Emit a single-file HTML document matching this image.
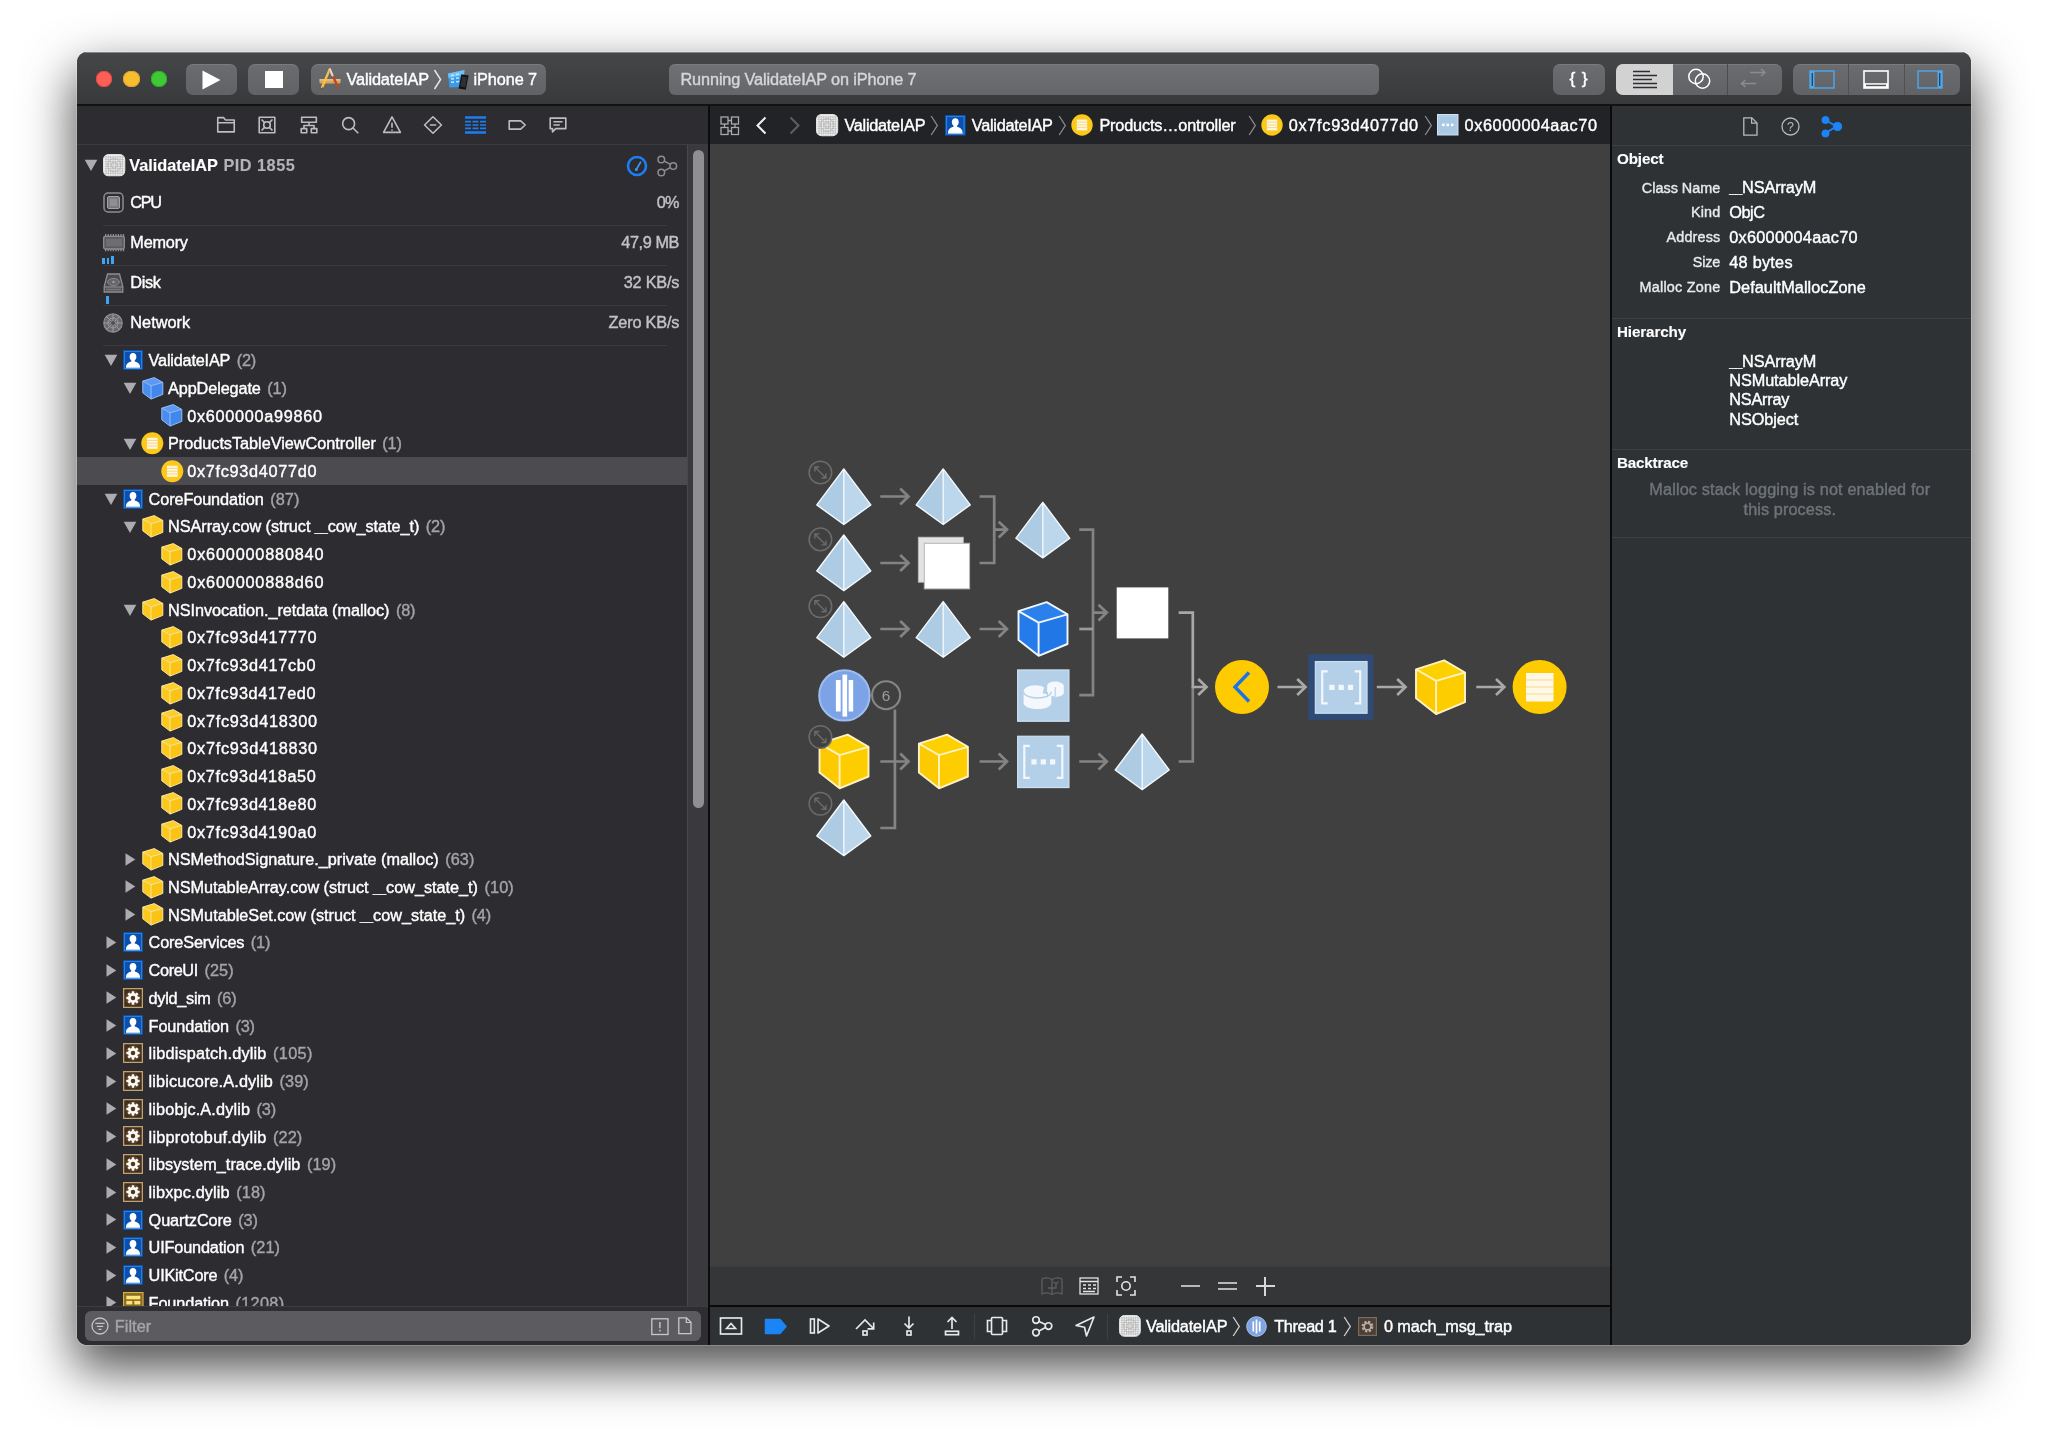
<!DOCTYPE html>
<html><head><meta charset="utf-8"><title>Xcode Memory Graph</title>
<style>html,body{margin:0;padding:0;background:#fff;width:2048px;height:1448px;overflow:hidden}
body{font-family:'Liberation Sans',sans-serif;position:relative}
#win{will-change:transform;position:absolute;left:77px;top:52px;width:1893.700px;height:1293.300px;border-radius:10px;overflow:hidden;background:#2d2c31;
 box-shadow:0 0 0 1px rgba(255,255,255,.2),0 22px 50px 3px rgba(0,0,0,.68)}
#win div,#win svg,#win .t{position:absolute}
#win div{box-sizing:border-box}
.t{white-space:pre;display:block;-webkit-text-stroke:0.4px currentColor;transform-origin:50% 52%}
svg{overflow:visible}
.btn{background:linear-gradient(#6a6c6f,#606265);border-radius:7px;box-shadow:inset 0 1px 0 rgba(255,255,255,.10)}

.t[style*=bold]{-webkit-text-stroke:0.12px currentColor}
</style></head>
<body><div id="win"><div class="" style="left:0px;top:0px;width:1894px;height:51.9px;background:linear-gradient(#464749,#38393b);box-shadow:inset 0 1px 0 rgba(255,255,255,.34)"></div><div class="" style="left:0px;top:51.9px;width:1894px;height:1.8px;background:#121213"></div><div class="" style="left:0px;top:53.7px;width:631.5px;height:1240.3px;background:#2d2c31"></div><div class="" style="left:631.3px;top:53.7px;width:1.6px;height:1240.3px;background:#0c0c0d"></div><div class="" style="left:632.9px;top:53.7px;width:900.1px;height:38.2px;background:#212326"></div><div class="" style="left:632.9px;top:91.9px;width:900.1px;height:1122.1px;background:#404040"></div><div class="" style="left:632.9px;top:1214px;width:900.1px;height:39px;background:#353637;border-top:1px solid #3c3d3d"></div><div class="" style="left:632.9px;top:1253px;width:900.1px;height:2px;background:#0a0a0b"></div><div class="" style="left:632.9px;top:1255px;width:900.1px;height:39px;background:#2f3235"></div><div class="" style="left:1533px;top:53.7px;width:2.2px;height:1240.3px;background:#0a0a0b"></div><div class="" style="left:1535.2px;top:53.7px;width:358.8px;height:1240.3px;background:#2f3235"></div><div class="" style="left:18.7px;top:18.7px;width:16.6px;height:16.6px;background:#fd5f57;border-radius:50%;box-shadow:inset 0 0 0 0.8px #e2463f"></div><div class="" style="left:46.3px;top:18.7px;width:16.6px;height:16.6px;background:#f5bd2f;border-radius:50%;box-shadow:inset 0 0 0 0.8px #dea123"></div><div class="" style="left:73.9px;top:18.7px;width:16.6px;height:16.6px;background:#3fc933;border-radius:50%;box-shadow:inset 0 0 0 0.8px #2dac2f"></div><div class="btn" style="left:109px;top:12px;width:51px;height:30.5px;"></div><svg style="left:123px;top:16.5px" width="22" height="22" viewBox="0 0 22 22" ><path d="M2.5 1.5 L20.5 11 L2.5 20.5 Z" fill="#fff"/></svg><div class="btn" style="left:171px;top:12px;width:51px;height:30.5px;"></div><div class="" style="left:188px;top:18.5px;width:17.5px;height:17.5px;background:#fff"></div><div class="btn" style="left:234px;top:12px;width:235px;height:30.5px;"></div><svg style="left:241px;top:15px" width="24" height="24" viewBox="0 0 24 24" ><rect x="1.5" y="12.2" width="21" height="4.2" rx=".8" fill="#d9a55c"/><rect x="1.5" y="12.2" width="21" height="1.3" fill="#f0c987"/>
<path d="M11.7 2.2 L4.2 20.3" stroke="#f5c443" stroke-width="2.3" stroke-linecap="round"/><path d="M4.2 20.3l-.9 2.2 1.9-1.5z" fill="#333"/>
<path d="M11.9 2.2 L20 20.6" stroke="#b64a2b" stroke-width="2.5" stroke-linecap="round"/><path d="M11.9 2.2 L14.5 8.4" stroke="#d8d8d8" stroke-width="2.2" stroke-linecap="round"/></svg><span class="t" style="left:269.5px;top:17px;line-height:21px;font-size:16.3px;color:#fff;letter-spacing:-0.125px;transform:scaleY(0.96);">ValidateIAP</span><svg style="left:356px;top:17px" width="10" height="21" viewBox="0 0 10 21" ><path d="M1.5 1 L7.6 10.5 L1.5 20" fill="none" stroke="#e6e6e6" stroke-width="1.5"/></svg><svg style="left:369px;top:15px" width="24" height="24" viewBox="0 0 24 24" ><path d="M2 6.5 L18.5 3 L16.8 20 L3.5 20.5 Z" fill="#3d9ae8"/><path d="M2 6.5 L18.5 3 L18 8 L2.6 11 Z" fill="#6fc0f7"/>
<path d="M5 8.6l3-.6M10 7.6l3-.6M5 12l3-.4M10 11.2l3-.5M5 15.3l3-.2M10 14.8l3-.3" stroke="#bfe3fb" stroke-width="1.6"/>
<path d="M15.4 7.2 L22.6 8.6 L19.8 22.8 L12.6 21.4 Z" fill="#111"/><path d="M16.3 9.2 L21.3 10.2 L19.2 20.6 L14.2 19.6 Z" fill="#2d2f33"/></svg><span class="t" style="left:396.5px;top:17px;line-height:21px;font-size:16.3px;color:#fff;letter-spacing:-0.098px;transform:scaleY(0.96);">iPhone 7</span><div class="" style="left:592px;top:12px;width:709.5px;height:30.5px;background:linear-gradient(#6f7174,#646669);border-radius:6px;box-shadow:inset 0 1px 0 rgba(255,255,255,.08)"></div><span class="t" style="left:603.5px;top:17px;line-height:21px;font-size:16.3px;color:#d6d6d8;letter-spacing:-0.135px;transform:scaleY(0.96);">Running ValidateIAP on iPhone 7</span><div class="btn" style="left:1476px;top:12px;width:52px;height:30.5px;"></div><span class="t" style="left:1492.5px;top:15px;line-height:23px;font-size:17.5px;color:#fff;letter-spacing:0.812px;transform:scaleY(0.96);">{ }</span><div class="btn" style="left:1539px;top:12px;width:166px;height:30.5px;overflow:hidden"><div style="left:0;top:0;width:56.5px;height:31px;background:#d2d2d3"></div><div style="left:110.5px;top:0;width:1px;height:31px;background:#4b4c4e"></div></div><svg style="left:1554px;top:17px" width="28" height="20" viewBox="0 0 28 20" ><path d="M2 2.5h17M2 6.5h24M2 10.5h19M2 14.5h24M2 18.5h24" stroke="#2e2e30" stroke-width="1.4"/></svg><svg style="left:1609px;top:15px" width="28" height="24" viewBox="0 0 28 24" ><circle cx="10" cy="9.5" r="7.2" fill="none" stroke="#fff" stroke-width="1.5"/><circle cx="16.5" cy="14" r="7.2" fill="none" stroke="#fff" stroke-width="1.5"/></svg><svg style="left:1663px;top:17px" width="28" height="20" viewBox="0 0 28 20" ><path d="M10 3.5h15M21 0l4 3.5-4 3.5" fill="none" stroke="#8b8c8e" stroke-width="1.5"/><path d="M16 14.5H1.5M5.5 11l-4 3.5 4 3.5" fill="none" stroke="#8b8c8e" stroke-width="1.5"/></svg><div class="btn" style="left:1716px;top:12px;width:166.5px;height:30.5px;"><div style="left:55px;top:0;width:1px;height:31px;background:#505153"></div><div style="left:110.5px;top:0;width:1px;height:31px;background:#505153"></div></div><svg style="left:1732px;top:17.5px" width="26" height="19" viewBox="0 0 26 19" ><rect x="1" y="1" width="24" height="17" fill="none" stroke="#4fa3e6" stroke-width="1.5"/><rect x="1" y="1" width="4.5" height="17" fill="#4fa8ea"/><rect x="2.6" y="3" width="1.4" height="13" fill="#2b4660"/></svg><svg style="left:1786px;top:17.5px" width="26" height="19" viewBox="0 0 26 19" ><rect x="1" y="1" width="24" height="17" fill="none" stroke="#fff" stroke-width="1.6"/><rect x="1" y="13.2" width="24" height="4.8" fill="#fff"/><rect x="3" y="14.7" width="20" height="1.5" fill="#555"/></svg><svg style="left:1840px;top:17.5px" width="26" height="19" viewBox="0 0 26 19" ><rect x="1" y="1" width="24" height="17" fill="none" stroke="#4fa3e6" stroke-width="1.5"/><rect x="20.5" y="1" width="4.5" height="17" fill="#4fa8ea"/><rect x="22" y="3" width="1.4" height="13" fill="#2b4660"/></svg><div class="" style="left:0px;top:91.8px;width:631.3px;height:1.1px;background:#3d3d41"></div><svg style="left:137.7px;top:62.3px" width="22" height="22" viewBox="0 0 24 24" ><g fill="none" stroke="#bdbdc1" stroke-width="1.750" stroke-linejoin="round"><path d="M3 6.5V4h6.5l2 2.5H21v13H3z"/><path d="M3 9.5h18"/></g></svg><svg style="left:179px;top:62.3px" width="22" height="22" viewBox="0 0 24 24" ><g fill="none" stroke="#bdbdc1" stroke-width="1.750" stroke-linejoin="round"><rect x="3.5" y="3.5" width="17" height="17"/><circle cx="12" cy="12" r="3.6"/><path d="M6 6l3.4 3.4M18 6l-3.4 3.4M6 18l3.4-3.4M18 18l-3.4-3.4"/></g></svg><svg style="left:221px;top:62.3px" width="22" height="22" viewBox="0 0 24 24" ><g fill="none" stroke="#bdbdc1" stroke-width="1.750" stroke-linejoin="round"><rect x="4" y="3.5" width="16" height="5.5"/><path d="M12 9v3.5M6.5 16v-3.5h11V16"/><rect x="3.5" y="16" width="6" height="4.5"/><rect x="14.5" y="16" width="6" height="4.5"/></g></svg><svg style="left:261.7px;top:62.3px" width="22" height="22" viewBox="0 0 24 24" ><g fill="none" stroke="#bdbdc1" stroke-width="1.750" stroke-linejoin="round"><circle cx="10.5" cy="10.5" r="6.5"/><path d="M15.3 15.3L21 21"/></g></svg><svg style="left:303.7px;top:62.3px" width="22" height="22" viewBox="0 0 24 24" ><g fill="none" stroke="#bdbdc1" stroke-width="1.750" stroke-linejoin="round"><path d="M12 3.2L21.2 20H2.8z" stroke-linejoin="round"/><path d="M12 9.5v5.5M12 16.8v1.6"/></g></svg><svg style="left:345px;top:62.3px" width="22" height="22" viewBox="0 0 24 24" ><g fill="none" stroke="#bdbdc1" stroke-width="1.750" stroke-linejoin="round"><path d="M12 3l9.2 9L12 21 2.8 12z" stroke-linejoin="round"/><path d="M8.5 12h7"/></g></svg><svg style="left:387.7px;top:63.6px" width="21" height="18" viewBox="0 0 21 18" ><g stroke="#1b7ef5" fill="none"><path d="M0 1.500h21M0 16.500h21" stroke-width="2.600"/><path d="M0 5.700h6M7.500 5.700h6M15 5.700h6M0 9h6M7.500 9h6M15 9h6M0 12.300h6M7.500 12.300h6M15 12.300h6" stroke-width="1.700"/></g></svg><svg style="left:428.7px;top:62.3px" width="22" height="22" viewBox="0 0 24 24" ><g fill="none" stroke="#bdbdc1" stroke-width="1.750" stroke-linejoin="round"><path d="M3.5 7.5h12.5l5 4.5-5 4.5H3.5z" stroke-linejoin="round"/></g></svg><svg style="left:470px;top:62.3px" width="22" height="22" viewBox="0 0 24 24" ><g fill="none" stroke="#bdbdc1" stroke-width="1.750" stroke-linejoin="round"><path d="M3.5 4.5h17v11.5H9.5L6 19.5V16H3.5z" stroke-linejoin="round"/><path d="M7 8.5h10M7 12h7"/></g></svg><svg style="left:7.3px;top:107px" width="14" height="13" viewBox="0 0 14 13" ><path d="M0.700 .8h12.600L7 12z" fill="#acacb0"/></svg><svg style="left:25.5px;top:102.2px" width="22.3" height="22.3" viewBox="0 0 22 22" ><rect x=".5" y=".5" width="21" height="21" rx="5" fill="#f4f4f4"/><path d="M3.0 1.500v19M1.500 3.0h19" stroke="#a9a9a9" stroke-width=".55"/><path d="M5.3 1.500v19M1.500 5.3h19" stroke="#a9a9a9" stroke-width=".55"/><path d="M7.6 1.500v19M1.500 7.6h19" stroke="#a9a9a9" stroke-width=".55"/><path d="M9.899999999999999 1.500v19M1.500 9.899999999999999h19" stroke="#a9a9a9" stroke-width=".55"/><path d="M12.2 1.500v19M1.500 12.2h19" stroke="#a9a9a9" stroke-width=".55"/><path d="M14.5 1.500v19M1.500 14.5h19" stroke="#a9a9a9" stroke-width=".55"/><path d="M16.799999999999997 1.500v19M1.500 16.799999999999997h19" stroke="#a9a9a9" stroke-width=".55"/><path d="M19.099999999999998 1.500v19M1.500 19.099999999999998h19" stroke="#a9a9a9" stroke-width=".55"/><circle cx="11" cy="11" r="6.500" fill="none" stroke="#a9a9a9" stroke-width=".6"/><circle cx="11" cy="11" r="3" fill="none" stroke="#a9a9a9" stroke-width=".6"/><rect x=".5" y=".5" width="21" height="21" rx="5" fill="none" stroke="#e0e0e0" stroke-width="1"/></svg><span class="t" style="left:52.3px;top:103px;line-height:21px;font-size:16.3px;color:#fff;font-weight:bold;letter-spacing:-0.008px;transform:scaleY(0.96);">ValidateIAP</span><span class="t" style="left:146.4px;top:103px;line-height:21px;font-size:16.3px;color:#b4b4b8;font-weight:bold;letter-spacing:0.501px;transform:scaleY(0.96);">PID 1855</span><svg style="left:549px;top:102.5px" width="22" height="22" viewBox="0 0 22 22" ><circle cx="11" cy="11" r="9" fill="none" stroke="#1b7ef5" stroke-width="2.600"/><path d="M10.300 14.500L14.600 7.200" stroke="#3a93f7" stroke-width="1.700" stroke-linecap="round"/><circle cx="10.300" cy="14.600" r="1.500" fill="#3a93f7"/></svg><svg style="left:578px;top:102px" width="24" height="24" viewBox="0 0 24 24" ><g fill="none" stroke="#8d8d92" stroke-width="1.5"><circle cx="6.300" cy="5.500" r="3.300"/><circle cx="6.300" cy="18.500" r="3.300"/><circle cx="18.300" cy="12" r="3.300"/><path d="M9.300 7.100l6 3.300M9.300 16.900l6-3.300"/></g></svg><svg style="left:25.9px;top:139.9px" width="21" height="21" viewBox="0 0 21 21" ><rect x="1" y="1" width="19" height="19" rx="4" fill="#2f2f33" stroke="#8e8e92" stroke-width="1.500"/><rect x="4.500" y="4.500" width="12" height="12" rx="1.500" fill="#77777b" stroke="#a2a2a6" stroke-width="1"/><rect x="6.800" y="6.800" width="7.400" height="7.400" fill="#8f8f93"/></svg><span class="t" style="left:53.3px;top:140px;line-height:21px;font-size:16.3px;color:#fff;letter-spacing:-1.33px;transform:scaleY(0.96);">CPU</span><span class="t" style="left:579.83px;top:140px;line-height:21px;font-size:16.3px;color:#c2c2c6;letter-spacing:-0.973px;transform:scaleY(0.96);">0%</span><div class="" style="left:25.9px;top:172.8px;width:564.6px;height:1.2px;background:#3b3b3f"></div><svg style="left:25.5px;top:182px" width="22" height="18" viewBox="0 0 22 18" ><rect x="2.0" y="0" width="1.300" height="2.300" fill="#8e8e92"/><rect x="2.0" y="15" width="1.300" height="2.300" fill="#8e8e92"/><rect x="4.55" y="0" width="1.300" height="2.300" fill="#8e8e92"/><rect x="4.55" y="15" width="1.300" height="2.300" fill="#8e8e92"/><rect x="7.1" y="0" width="1.300" height="2.300" fill="#8e8e92"/><rect x="7.1" y="15" width="1.300" height="2.300" fill="#8e8e92"/><rect x="9.649999999999999" y="0" width="1.300" height="2.300" fill="#8e8e92"/><rect x="9.649999999999999" y="15" width="1.300" height="2.300" fill="#8e8e92"/><rect x="12.2" y="0" width="1.300" height="2.300" fill="#8e8e92"/><rect x="12.2" y="15" width="1.300" height="2.300" fill="#8e8e92"/><rect x="14.75" y="0" width="1.300" height="2.300" fill="#8e8e92"/><rect x="14.75" y="15" width="1.300" height="2.300" fill="#8e8e92"/><rect x="17.299999999999997" y="0" width="1.300" height="2.300" fill="#8e8e92"/><rect x="17.299999999999997" y="15" width="1.300" height="2.300" fill="#8e8e92"/><rect x="19.849999999999998" y="0" width="1.300" height="2.300" fill="#8e8e92"/><rect x="19.849999999999998" y="15" width="1.300" height="2.300" fill="#8e8e92"/><rect x=".7" y="2.300" width="20.600" height="12.700" rx="1.500" fill="#5a5a5e" stroke="#8e8e92" stroke-width="1.300"/><rect x="3" y="4.800" width="16" height="7.700" fill="#6e6e72"/></svg><span class="t" style="left:53.3px;top:180px;line-height:21px;font-size:16.3px;color:#fff;letter-spacing:-0.219px;transform:scaleY(0.96);">Memory</span><span class="t" style="left:544.28px;top:180px;line-height:21px;font-size:16.3px;color:#c2c2c6;letter-spacing:-0.42px;transform:scaleY(0.96);">47,9 MB</span><div class="" style="left:25.9px;top:212.8px;width:564.6px;height:1.2px;background:#3b3b3f"></div><div class="" style="left:25.1px;top:205.9px;width:3.3px;height:6.6px;background:#3ea4f4"></div><div class="" style="left:29.6px;top:206.4px;width:2.9px;height:6.1px;background:#3ea4f4"></div><div class="" style="left:33.7px;top:204.4px;width:3.1px;height:8.1px;background:#3ea4f4"></div><svg style="left:25.9px;top:220.5px" width="21" height="20" viewBox="0 0 21 20" ><path d="M4.500 1h12l3.300 12.500V19H1.200v-5.500z" fill="#4c4c50" stroke="#8e8e92" stroke-width="1.300"/><ellipse cx="10.500" cy="9" rx="5.800" ry="3.600" fill="#66666a" stroke="#8b8b8f" stroke-width="1"/><circle cx="10.500" cy="9" r="1.300" fill="#9a9a9e"/><path d="M1.200 14h18.600" stroke="#8e8e92" stroke-width="1.200"/><rect x="3" y="15.600" width="15" height="1.800" fill="#77777b"/></svg><span class="t" style="left:53.3px;top:220px;line-height:21px;font-size:16.3px;color:#fff;letter-spacing:-0.364px;transform:scaleY(0.96);">Disk</span><span class="t" style="left:546.77px;top:220px;line-height:21px;font-size:16.3px;color:#c2c2c6;letter-spacing:-0.233px;transform:scaleY(0.96);">32 KB/s</span><div class="" style="left:25.9px;top:253.0px;width:564.6px;height:1.2px;background:#3b3b3f"></div><div class="" style="left:29.2px;top:244.3px;width:3.3px;height:8.2px;background:#3ea4f4"></div><svg style="left:26.3px;top:260.8px" width="20" height="20" viewBox="0 0 20 20" ><circle cx="10" cy="10" r="9.200" fill="#6a6a6e" stroke="#8e8e92" stroke-width="1.200"/><g fill="none" stroke="#9c9ca0" stroke-width="1"><circle cx="10" cy="10" r="5"/><path d="M10 1v18M1 10h18M3.500 3.500l13 13M16.500 3.500l-13 13"/></g><circle cx="10" cy="10" r="2" fill="#4f4f53"/></svg><span class="t" style="left:53.3px;top:260px;line-height:21px;font-size:16.3px;color:#fff;letter-spacing:0.012px;transform:scaleY(0.96);">Network</span><span class="t" style="left:531.6px;top:260px;line-height:21px;font-size:16.3px;color:#c2c2c6;letter-spacing:-0.199px;transform:scaleY(0.96);">Zero KB/s</span><div class="" style="left:25.9px;top:292.7px;width:564.6px;height:1.2px;background:#3b3b3f"></div><div class="" style="left:0px;top:405.16px;width:610px;height:27.73px;background:#4b4b50"></div><svg style="left:26.6px;top:302.4px" width="14" height="13" viewBox="0 0 14 13" ><path d="M0.700 .8h12.600L7 12z" fill="#acacb0"/></svg><svg style="left:46.0px;top:297.9px" width="20" height="20" viewBox="0 0 22 22" ><rect x=".5" y=".5" width="21" height="21" fill="#0b50ae" stroke="#0d4c9f" stroke-width="1"/><rect x="1.600" y="1.600" width="18.800" height="18.800" fill="none" stroke="#2580e4" stroke-width="1.300"/>
<path d="M11 3.4c2.3 0 3.7 1.7 3.7 4 0 1.7-.8 3.3-1.8 4.1v1.1c2.4.7 5.3 1.9 5.8 5.3v1.6H3.300v-1.6c.5-3.400 3.400-4.600 5.800-5.300v-1.100c-1-.8-1.800-2.400-1.800-4.100 0-2.300 1.400-4 3.700-4z" fill="#fff"/><path d="M3.3 19.500h15.400" stroke="#bcd9f7" stroke-width="1.2"/></svg><span class="t" style="left:71.6px;top:298px;line-height:21px;font-size:16.3px;color:#fff;letter-spacing:-0.207px;transform:scaleY(0.96);">ValidateIAP</span><span class="t" style="left:159.7px;top:298px;line-height:21px;font-size:16.3px;color:#a3a3a8;letter-spacing:-0.169px;transform:scaleY(0.96);">(2)</span><svg style="left:45.9px;top:330.13px" width="14" height="13" viewBox="0 0 14 13" ><path d="M0.700 .8h12.600L7 12z" fill="#acacb0"/></svg><svg style="left:64.7px;top:324.53px" width="21.6" height="22.58" viewBox="0 0 22 23" ><path d="M12.5 0.6L21.2 5.5L9.2 8.9L0.8 4.2z" fill="#5b99f2"/><path d="M0.8 4.2L9.2 8.9L9.2 22.5L0.8 16.1z" fill="#4a8df0"/><path d="M9.2 8.9L21.2 5.5L21.2 17.7L9.2 22.5z" fill="#4287ec"/><path d="M12.5 0.6L21.2 5.5L21.2 17.7L9.2 22.5L0.8 16.1L0.8 4.2zM.800 4.200L9.200 8.900L21.200 5.500M9.200 8.900V22.500" fill="none" stroke="#96c0fa" stroke-width="1" stroke-linejoin="round"/></svg><span class="t" style="left:91px;top:326px;line-height:21px;font-size:16.3px;color:#fff;letter-spacing:-0.123px;transform:scaleY(0.96);">AppDelegate</span><span class="t" style="left:190.3px;top:326px;line-height:21px;font-size:16.3px;color:#a3a3a8;letter-spacing:-0.169px;transform:scaleY(0.96);">(1)</span><svg style="left:84.0px;top:352.26px" width="21.6" height="22.58" viewBox="0 0 22 23" ><path d="M12.5 0.6L21.2 5.5L9.2 8.9L0.8 4.2z" fill="#5b99f2"/><path d="M0.8 4.2L9.2 8.9L9.2 22.5L0.8 16.1z" fill="#4a8df0"/><path d="M9.2 8.9L21.2 5.5L21.2 17.7L9.2 22.5z" fill="#4287ec"/><path d="M12.5 0.6L21.2 5.5L21.2 17.7L9.2 22.5L0.8 16.1L0.8 4.2zM.800 4.200L9.200 8.900L21.200 5.500M9.200 8.900V22.500" fill="none" stroke="#96c0fa" stroke-width="1" stroke-linejoin="round"/></svg><span class="t" style="left:110.3px;top:354px;line-height:21px;font-size:16.3px;color:#fff;letter-spacing:0.681px;transform:scaleY(0.96);">0x600000a99860</span><svg style="left:45.9px;top:385.59px" width="14" height="13" viewBox="0 0 14 13" ><path d="M0.700 .8h12.600L7 12z" fill="#acacb0"/></svg><svg style="left:64.2px;top:380.09px" width="22.6" height="22.6" viewBox="0 0 22 22" ><circle cx="11" cy="11" r="10.700" fill="#fcc81a"/><rect x="5.800" y="5.600" width="10.400" height="10.800" fill="#fff6dc"/><path d="M5.800 8.200h10.400M5.800 10.900h10.400M5.800 13.600h10.400" stroke="#f3cf7a" stroke-width=".8"/></svg><span class="t" style="left:91px;top:381px;line-height:21px;font-size:16.3px;color:#fff;letter-spacing:-0.035px;transform:scaleY(0.96);">ProductsTableViewController</span><span class="t" style="left:305.3px;top:381px;line-height:21px;font-size:16.3px;color:#a3a3a8;letter-spacing:-0.169px;transform:scaleY(0.96);">(1)</span><svg style="left:83.5px;top:407.82px" width="22.6" height="22.6" viewBox="0 0 22 22" ><circle cx="11" cy="11" r="10.700" fill="#fcc81a"/><rect x="5.800" y="5.600" width="10.400" height="10.800" fill="#fff6dc"/><path d="M5.800 8.200h10.400M5.800 10.900h10.400M5.800 13.600h10.400" stroke="#f3cf7a" stroke-width=".8"/></svg><span class="t" style="left:110.3px;top:409px;line-height:21px;font-size:16.3px;color:#fff;letter-spacing:0.677px;transform:scaleY(0.96);">0x7fc93d4077d0</span><svg style="left:26.6px;top:441.05px" width="14" height="13" viewBox="0 0 14 13" ><path d="M0.700 .8h12.600L7 12z" fill="#acacb0"/></svg><svg style="left:46.0px;top:436.55px" width="20" height="20" viewBox="0 0 22 22" ><rect x=".5" y=".5" width="21" height="21" fill="#0b50ae" stroke="#0d4c9f" stroke-width="1"/><rect x="1.600" y="1.600" width="18.800" height="18.800" fill="none" stroke="#2580e4" stroke-width="1.300"/>
<path d="M11 3.4c2.3 0 3.7 1.7 3.7 4 0 1.7-.8 3.3-1.8 4.1v1.1c2.4.7 5.3 1.9 5.8 5.3v1.6H3.300v-1.6c.5-3.400 3.400-4.600 5.800-5.300v-1.100c-1-.8-1.800-2.400-1.800-4.100 0-2.300 1.400-4 3.700-4z" fill="#fff"/><path d="M3.3 19.500h15.400" stroke="#bcd9f7" stroke-width="1.2"/></svg><span class="t" style="left:71.6px;top:437px;line-height:21px;font-size:16.3px;color:#fff;letter-spacing:-0.119px;transform:scaleY(0.96);">CoreFoundation</span><span class="t" style="left:193.2px;top:437px;line-height:21px;font-size:16.3px;color:#a3a3a8;letter-spacing:0.083px;transform:scaleY(0.96);">(87)</span><svg style="left:45.9px;top:468.78px" width="14" height="13" viewBox="0 0 14 13" ><path d="M0.700 .8h12.600L7 12z" fill="#acacb0"/></svg><svg style="left:64.7px;top:463.18px" width="21.6" height="22.58" viewBox="0 0 22 23" ><path d="M12.5 0.6L21.2 5.5L9.2 8.9L0.8 4.2z" fill="#fdcd2a"/><path d="M0.8 4.2L9.2 8.9L9.2 22.5L0.8 16.1z" fill="#fcc81c"/><path d="M9.2 8.9L21.2 5.5L21.2 17.7L9.2 22.5z" fill="#fbc414"/><path d="M12.5 0.6L21.2 5.5L21.2 17.7L9.2 22.5L0.8 16.1L0.8 4.2zM.800 4.200L9.200 8.900L21.200 5.500M9.200 8.900V22.500" fill="none" stroke="#fdeaa0" stroke-width="1" stroke-linejoin="round"/></svg><span class="t" style="left:91px;top:464px;line-height:21px;font-size:16.3px;color:#fff;letter-spacing:-0.062px;transform:scaleY(0.96);">NSArray.cow (struct <span style="font-size:72%">__</span>cow_state_t)</span><span class="t" style="left:348.8px;top:464px;line-height:21px;font-size:16.3px;color:#a3a3a8;letter-spacing:-0.169px;transform:scaleY(0.96);">(2)</span><svg style="left:84.0px;top:490.91px" width="21.6" height="22.58" viewBox="0 0 22 23" ><path d="M12.5 0.6L21.2 5.5L9.2 8.9L0.8 4.2z" fill="#fdcd2a"/><path d="M0.8 4.2L9.2 8.9L9.2 22.5L0.8 16.1z" fill="#fcc81c"/><path d="M9.2 8.9L21.2 5.5L21.2 17.7L9.2 22.5z" fill="#fbc414"/><path d="M12.5 0.6L21.2 5.5L21.2 17.7L9.2 22.5L0.8 16.1L0.8 4.2zM.800 4.200L9.200 8.900L21.200 5.500M9.200 8.900V22.500" fill="none" stroke="#fdeaa0" stroke-width="1" stroke-linejoin="round"/></svg><span class="t" style="left:110.3px;top:492px;line-height:21px;font-size:16.3px;color:#fff;letter-spacing:0.796px;transform:scaleY(0.96);">0x600000880840</span><svg style="left:84.0px;top:518.64px" width="21.6" height="22.58" viewBox="0 0 22 23" ><path d="M12.5 0.6L21.2 5.5L9.2 8.9L0.8 4.2z" fill="#fdcd2a"/><path d="M0.8 4.2L9.2 8.9L9.2 22.5L0.8 16.1z" fill="#fcc81c"/><path d="M9.2 8.9L21.2 5.5L21.2 17.7L9.2 22.5z" fill="#fbc414"/><path d="M12.5 0.6L21.2 5.5L21.2 17.7L9.2 22.5L0.8 16.1L0.8 4.2zM.800 4.200L9.200 8.900L21.200 5.500M9.200 8.900V22.500" fill="none" stroke="#fdeaa0" stroke-width="1" stroke-linejoin="round"/></svg><span class="t" style="left:110.3px;top:520px;line-height:21px;font-size:16.3px;color:#fff;letter-spacing:0.796px;transform:scaleY(0.96);">0x600000888d60</span><svg style="left:45.9px;top:551.97px" width="14" height="13" viewBox="0 0 14 13" ><path d="M0.700 .8h12.600L7 12z" fill="#acacb0"/></svg><svg style="left:64.7px;top:546.37px" width="21.6" height="22.58" viewBox="0 0 22 23" ><path d="M12.5 0.6L21.2 5.5L9.2 8.9L0.8 4.2z" fill="#fdcd2a"/><path d="M0.8 4.2L9.2 8.9L9.2 22.5L0.8 16.1z" fill="#fcc81c"/><path d="M9.2 8.9L21.2 5.5L21.2 17.7L9.2 22.5z" fill="#fbc414"/><path d="M12.5 0.6L21.2 5.5L21.2 17.7L9.2 22.5L0.8 16.1L0.8 4.2zM.800 4.200L9.200 8.900L21.200 5.500M9.200 8.900V22.500" fill="none" stroke="#fdeaa0" stroke-width="1" stroke-linejoin="round"/></svg><span class="t" style="left:91px;top:548px;line-height:21px;font-size:16.3px;color:#fff;letter-spacing:-0.071px;transform:scaleY(0.96);">NSInvocation._retdata (malloc)</span><span class="t" style="left:318.9px;top:548px;line-height:21px;font-size:16.3px;color:#a3a3a8;letter-spacing:-0.169px;transform:scaleY(0.96);">(8)</span><svg style="left:84.0px;top:574.1px" width="21.6" height="22.58" viewBox="0 0 22 23" ><path d="M12.5 0.6L21.2 5.5L9.2 8.9L0.8 4.2z" fill="#fdcd2a"/><path d="M0.8 4.2L9.2 8.9L9.2 22.5L0.8 16.1z" fill="#fcc81c"/><path d="M9.2 8.9L21.2 5.5L21.2 17.7L9.2 22.5z" fill="#fbc414"/><path d="M12.5 0.6L21.2 5.5L21.2 17.7L9.2 22.5L0.8 16.1L0.8 4.2zM.800 4.200L9.200 8.900L21.200 5.500M9.200 8.900V22.500" fill="none" stroke="#fdeaa0" stroke-width="1" stroke-linejoin="round"/></svg><span class="t" style="left:110.3px;top:575px;line-height:21px;font-size:16.3px;color:#fff;letter-spacing:0.677px;transform:scaleY(0.96);">0x7fc93d417770</span><svg style="left:84.0px;top:601.83px" width="21.6" height="22.58" viewBox="0 0 22 23" ><path d="M12.5 0.6L21.2 5.5L9.2 8.9L0.8 4.2z" fill="#fdcd2a"/><path d="M0.8 4.2L9.2 8.9L9.2 22.5L0.8 16.1z" fill="#fcc81c"/><path d="M9.2 8.9L21.2 5.5L21.2 17.7L9.2 22.5z" fill="#fbc414"/><path d="M12.5 0.6L21.2 5.5L21.2 17.7L9.2 22.5L0.8 16.1L0.8 4.2zM.800 4.200L9.200 8.900L21.200 5.500M9.200 8.900V22.500" fill="none" stroke="#fdeaa0" stroke-width="1" stroke-linejoin="round"/></svg><span class="t" style="left:110.3px;top:603px;line-height:21px;font-size:16.3px;color:#fff;letter-spacing:0.671px;transform:scaleY(0.96);">0x7fc93d417cb0</span><svg style="left:84.0px;top:629.56px" width="21.6" height="22.58" viewBox="0 0 22 23" ><path d="M12.5 0.6L21.2 5.5L9.2 8.9L0.8 4.2z" fill="#fdcd2a"/><path d="M0.8 4.2L9.2 8.9L9.2 22.5L0.8 16.1z" fill="#fcc81c"/><path d="M9.2 8.9L21.2 5.5L21.2 17.7L9.2 22.5z" fill="#fbc414"/><path d="M12.5 0.6L21.2 5.5L21.2 17.7L9.2 22.5L0.8 16.1L0.8 4.2zM.800 4.200L9.200 8.900L21.200 5.500M9.200 8.900V22.500" fill="none" stroke="#fdeaa0" stroke-width="1" stroke-linejoin="round"/></svg><span class="t" style="left:110.3px;top:631px;line-height:21px;font-size:16.3px;color:#fff;letter-spacing:0.606px;transform:scaleY(0.96);">0x7fc93d417ed0</span><svg style="left:84.0px;top:657.29px" width="21.6" height="22.58" viewBox="0 0 22 23" ><path d="M12.5 0.6L21.2 5.5L9.2 8.9L0.8 4.2z" fill="#fdcd2a"/><path d="M0.8 4.2L9.2 8.9L9.2 22.5L0.8 16.1z" fill="#fcc81c"/><path d="M9.2 8.9L21.2 5.5L21.2 17.7L9.2 22.5z" fill="#fbc414"/><path d="M12.5 0.6L21.2 5.5L21.2 17.7L9.2 22.5L0.8 16.1L0.8 4.2zM.800 4.200L9.200 8.900L21.200 5.500M9.200 8.900V22.500" fill="none" stroke="#fdeaa0" stroke-width="1" stroke-linejoin="round"/></svg><span class="t" style="left:110.3px;top:659px;line-height:21px;font-size:16.3px;color:#fff;letter-spacing:0.72px;transform:scaleY(0.96);">0x7fc93d418300</span><svg style="left:84.0px;top:685.02px" width="21.6" height="22.58" viewBox="0 0 22 23" ><path d="M12.5 0.6L21.2 5.5L9.2 8.9L0.8 4.2z" fill="#fdcd2a"/><path d="M0.8 4.2L9.2 8.9L9.2 22.5L0.8 16.1z" fill="#fcc81c"/><path d="M9.2 8.9L21.2 5.5L21.2 17.7L9.2 22.5z" fill="#fbc414"/><path d="M12.5 0.6L21.2 5.5L21.2 17.7L9.2 22.5L0.8 16.1L0.8 4.2zM.800 4.200L9.200 8.900L21.200 5.500M9.200 8.900V22.500" fill="none" stroke="#fdeaa0" stroke-width="1" stroke-linejoin="round"/></svg><span class="t" style="left:110.3px;top:686px;line-height:21px;font-size:16.3px;color:#fff;letter-spacing:0.72px;transform:scaleY(0.96);">0x7fc93d418830</span><svg style="left:84.0px;top:712.75px" width="21.6" height="22.58" viewBox="0 0 22 23" ><path d="M12.5 0.6L21.2 5.5L9.2 8.9L0.8 4.2z" fill="#fdcd2a"/><path d="M0.8 4.2L9.2 8.9L9.2 22.5L0.8 16.1z" fill="#fcc81c"/><path d="M9.2 8.9L21.2 5.5L21.2 17.7L9.2 22.5z" fill="#fbc414"/><path d="M12.5 0.6L21.2 5.5L21.2 17.7L9.2 22.5L0.8 16.1L0.8 4.2zM.800 4.200L9.200 8.900L21.200 5.500M9.200 8.900V22.500" fill="none" stroke="#fdeaa0" stroke-width="1" stroke-linejoin="round"/></svg><span class="t" style="left:110.3px;top:714px;line-height:21px;font-size:16.3px;color:#fff;letter-spacing:0.627px;transform:scaleY(0.96);">0x7fc93d418a50</span><svg style="left:84.0px;top:740.48px" width="21.6" height="22.58" viewBox="0 0 22 23" ><path d="M12.5 0.6L21.2 5.5L9.2 8.9L0.8 4.2z" fill="#fdcd2a"/><path d="M0.8 4.2L9.2 8.9L9.2 22.5L0.8 16.1z" fill="#fcc81c"/><path d="M9.2 8.9L21.2 5.5L21.2 17.7L9.2 22.5z" fill="#fbc414"/><path d="M12.5 0.6L21.2 5.5L21.2 17.7L9.2 22.5L0.8 16.1L0.8 4.2zM.800 4.200L9.200 8.900L21.200 5.500M9.200 8.900V22.500" fill="none" stroke="#fdeaa0" stroke-width="1" stroke-linejoin="round"/></svg><span class="t" style="left:110.3px;top:742px;line-height:21px;font-size:16.3px;color:#fff;letter-spacing:0.656px;transform:scaleY(0.96);">0x7fc93d418e80</span><svg style="left:84.0px;top:768.21px" width="21.6" height="22.58" viewBox="0 0 22 23" ><path d="M12.5 0.6L21.2 5.5L9.2 8.9L0.8 4.2z" fill="#fdcd2a"/><path d="M0.8 4.2L9.2 8.9L9.2 22.5L0.8 16.1z" fill="#fcc81c"/><path d="M9.2 8.9L21.2 5.5L21.2 17.7L9.2 22.5z" fill="#fbc414"/><path d="M12.5 0.6L21.2 5.5L21.2 17.7L9.2 22.5L0.8 16.1L0.8 4.2zM.800 4.200L9.200 8.900L21.200 5.500M9.200 8.900V22.500" fill="none" stroke="#fdeaa0" stroke-width="1" stroke-linejoin="round"/></svg><span class="t" style="left:110.3px;top:770px;line-height:21px;font-size:16.3px;color:#fff;letter-spacing:0.656px;transform:scaleY(0.96);">0x7fc93d4190a0</span><svg style="left:48.3px;top:800.74px" width="11" height="13" viewBox="0 0 11 13" ><path d="M0.500 0.300v12.400L10.300 6.500z" fill="#acacb0"/></svg><svg style="left:64.7px;top:795.94px" width="21.6" height="22.58" viewBox="0 0 22 23" ><path d="M12.5 0.6L21.2 5.5L9.2 8.9L0.8 4.2z" fill="#fdcd2a"/><path d="M0.8 4.2L9.2 8.9L9.2 22.5L0.8 16.1z" fill="#fcc81c"/><path d="M9.2 8.9L21.2 5.5L21.2 17.7L9.2 22.5z" fill="#fbc414"/><path d="M12.5 0.6L21.2 5.5L21.2 17.7L9.2 22.5L0.8 16.1L0.8 4.2zM.800 4.200L9.200 8.900L21.200 5.500M9.200 8.900V22.500" fill="none" stroke="#fdeaa0" stroke-width="1" stroke-linejoin="round"/></svg><span class="t" style="left:91px;top:797px;line-height:21px;font-size:16.3px;color:#fff;letter-spacing:-0.022px;transform:scaleY(0.96);">NSMethodSignature._private (malloc)</span><span class="t" style="left:368.2px;top:797px;line-height:21px;font-size:16.3px;color:#a3a3a8;letter-spacing:0.083px;transform:scaleY(0.96);">(63)</span><svg style="left:48.3px;top:828.47px" width="11" height="13" viewBox="0 0 11 13" ><path d="M0.500 0.300v12.400L10.300 6.500z" fill="#acacb0"/></svg><svg style="left:64.7px;top:823.67px" width="21.6" height="22.58" viewBox="0 0 22 23" ><path d="M12.5 0.6L21.2 5.5L9.2 8.9L0.8 4.2z" fill="#fdcd2a"/><path d="M0.8 4.2L9.2 8.9L9.2 22.5L0.8 16.1z" fill="#fcc81c"/><path d="M9.2 8.9L21.2 5.5L21.2 17.7L9.2 22.5z" fill="#fbc414"/><path d="M12.5 0.6L21.2 5.5L21.2 17.7L9.2 22.5L0.8 16.1L0.8 4.2zM.800 4.200L9.200 8.900L21.200 5.500M9.200 8.900V22.500" fill="none" stroke="#fdeaa0" stroke-width="1" stroke-linejoin="round"/></svg><span class="t" style="left:91px;top:825px;line-height:21px;font-size:16.3px;color:#fff;letter-spacing:-0.033px;transform:scaleY(0.96);">NSMutableArray.cow (struct <span style="font-size:72%">__</span>cow_state_t)</span><span class="t" style="left:407.5px;top:825px;line-height:21px;font-size:16.3px;color:#a3a3a8;letter-spacing:0.083px;transform:scaleY(0.96);">(10)</span><svg style="left:48.3px;top:856.2px" width="11" height="13" viewBox="0 0 11 13" ><path d="M0.500 0.300v12.400L10.300 6.500z" fill="#acacb0"/></svg><svg style="left:64.7px;top:851.4px" width="21.6" height="22.58" viewBox="0 0 22 23" ><path d="M12.5 0.6L21.2 5.5L9.2 8.9L0.8 4.2z" fill="#fdcd2a"/><path d="M0.8 4.2L9.2 8.9L9.2 22.5L0.8 16.1z" fill="#fcc81c"/><path d="M9.2 8.9L21.2 5.5L21.2 17.7L9.2 22.5z" fill="#fbc414"/><path d="M12.5 0.6L21.2 5.5L21.2 17.7L9.2 22.5L0.8 16.1L0.8 4.2zM.800 4.200L9.200 8.900L21.200 5.500M9.200 8.900V22.500" fill="none" stroke="#fdeaa0" stroke-width="1" stroke-linejoin="round"/></svg><span class="t" style="left:91px;top:853px;line-height:21px;font-size:16.3px;color:#fff;letter-spacing:-0.025px;transform:scaleY(0.96);">NSMutableSet.cow (struct <span style="font-size:72%">__</span>cow_state_t)</span><span class="t" style="left:394.6px;top:853px;line-height:21px;font-size:16.3px;color:#a3a3a8;letter-spacing:-0.169px;transform:scaleY(0.96);">(4)</span><svg style="left:29.0px;top:883.93px" width="11" height="13" viewBox="0 0 11 13" ><path d="M0.500 0.300v12.400L10.300 6.500z" fill="#acacb0"/></svg><svg style="left:46.0px;top:880.23px" width="20" height="20" viewBox="0 0 22 22" ><rect x=".5" y=".5" width="21" height="21" fill="#0b50ae" stroke="#0d4c9f" stroke-width="1"/><rect x="1.600" y="1.600" width="18.800" height="18.800" fill="none" stroke="#2580e4" stroke-width="1.300"/>
<path d="M11 3.4c2.3 0 3.7 1.7 3.7 4 0 1.7-.8 3.3-1.8 4.1v1.1c2.4.7 5.3 1.9 5.8 5.3v1.6H3.300v-1.6c.5-3.400 3.400-4.600 5.800-5.300v-1.100c-1-.8-1.800-2.400-1.800-4.100 0-2.300 1.400-4 3.700-4z" fill="#fff"/><path d="M3.3 19.500h15.400" stroke="#bcd9f7" stroke-width="1.2"/></svg><span class="t" style="left:71.6px;top:880px;line-height:21px;font-size:16.3px;color:#fff;letter-spacing:-0.17px;transform:scaleY(0.96);">CoreServices</span><span class="t" style="left:173.8px;top:880px;line-height:21px;font-size:16.3px;color:#a3a3a8;letter-spacing:-0.169px;transform:scaleY(0.96);">(1)</span><svg style="left:29.0px;top:911.66px" width="11" height="13" viewBox="0 0 11 13" ><path d="M0.500 0.300v12.400L10.300 6.500z" fill="#acacb0"/></svg><svg style="left:46.0px;top:907.96px" width="20" height="20" viewBox="0 0 22 22" ><rect x=".5" y=".5" width="21" height="21" fill="#0b50ae" stroke="#0d4c9f" stroke-width="1"/><rect x="1.600" y="1.600" width="18.800" height="18.800" fill="none" stroke="#2580e4" stroke-width="1.300"/>
<path d="M11 3.4c2.3 0 3.7 1.7 3.7 4 0 1.7-.8 3.3-1.8 4.1v1.1c2.4.7 5.3 1.9 5.8 5.3v1.6H3.300v-1.6c.5-3.400 3.400-4.600 5.800-5.300v-1.100c-1-.8-1.800-2.400-1.800-4.100 0-2.300 1.400-4 3.700-4z" fill="#fff"/><path d="M3.3 19.500h15.400" stroke="#bcd9f7" stroke-width="1.2"/></svg><span class="t" style="left:71.6px;top:908px;line-height:21px;font-size:16.3px;color:#fff;letter-spacing:-0.38px;transform:scaleY(0.96);">CoreUI</span><span class="t" style="left:127.4px;top:908px;line-height:21px;font-size:16.3px;color:#a3a3a8;letter-spacing:0.083px;transform:scaleY(0.96);">(25)</span><svg style="left:29.0px;top:939.39px" width="11" height="13" viewBox="0 0 11 13" ><path d="M0.500 0.300v12.400L10.300 6.500z" fill="#acacb0"/></svg><svg style="left:46.0px;top:935.69px" width="20" height="20" viewBox="0 0 22 22" ><rect x=".7" y=".7" width="20.600" height="20.600" fill="#3e2f20" stroke="#c4a270" stroke-width="1.400"/><circle cx="11" cy="11" r="8.500" fill="#6a5136" opacity=".55"/>
<rect x="9.600" y="3.700" width="2.800" height="3" rx=".5" transform="rotate(0 11 11)" fill="#fdf8f0"/><rect x="9.600" y="3.700" width="2.800" height="3" rx=".5" transform="rotate(45 11 11)" fill="#fdf8f0"/><rect x="9.600" y="3.700" width="2.800" height="3" rx=".5" transform="rotate(90 11 11)" fill="#fdf8f0"/><rect x="9.600" y="3.700" width="2.800" height="3" rx=".5" transform="rotate(135 11 11)" fill="#fdf8f0"/><rect x="9.600" y="3.700" width="2.800" height="3" rx=".5" transform="rotate(180 11 11)" fill="#fdf8f0"/><rect x="9.600" y="3.700" width="2.800" height="3" rx=".5" transform="rotate(225 11 11)" fill="#fdf8f0"/><rect x="9.600" y="3.700" width="2.800" height="3" rx=".5" transform="rotate(270 11 11)" fill="#fdf8f0"/><rect x="9.600" y="3.700" width="2.800" height="3" rx=".5" transform="rotate(315 11 11)" fill="#fdf8f0"/><circle cx="11" cy="11" r="5.600" fill="#fdf8f0"/><circle cx="11" cy="11" r="2.500" fill="#4a3724"/></svg><span class="t" style="left:71.6px;top:936px;line-height:21px;font-size:16.3px;color:#fff;letter-spacing:-0.294px;transform:scaleY(0.96);">dyld_sim</span><span class="t" style="left:140.0px;top:936px;line-height:21px;font-size:16.3px;color:#a3a3a8;letter-spacing:-0.169px;transform:scaleY(0.96);">(6)</span><svg style="left:29.0px;top:967.12px" width="11" height="13" viewBox="0 0 11 13" ><path d="M0.500 0.300v12.400L10.300 6.500z" fill="#acacb0"/></svg><svg style="left:46.0px;top:963.42px" width="20" height="20" viewBox="0 0 22 22" ><rect x=".5" y=".5" width="21" height="21" fill="#0b50ae" stroke="#0d4c9f" stroke-width="1"/><rect x="1.600" y="1.600" width="18.800" height="18.800" fill="none" stroke="#2580e4" stroke-width="1.300"/>
<path d="M11 3.4c2.3 0 3.7 1.7 3.7 4 0 1.7-.8 3.3-1.8 4.1v1.1c2.4.7 5.3 1.9 5.8 5.3v1.6H3.300v-1.6c.5-3.400 3.400-4.600 5.800-5.300v-1.100c-1-.8-1.800-2.400-1.800-4.100 0-2.300 1.400-4 3.700-4z" fill="#fff"/><path d="M3.3 19.500h15.400" stroke="#bcd9f7" stroke-width="1.2"/></svg><span class="t" style="left:71.6px;top:964px;line-height:21px;font-size:16.3px;color:#fff;letter-spacing:-0.118px;transform:scaleY(0.96);">Foundation</span><span class="t" style="left:158.4px;top:964px;line-height:21px;font-size:16.3px;color:#a3a3a8;letter-spacing:-0.169px;transform:scaleY(0.96);">(3)</span><svg style="left:29.0px;top:994.85px" width="11" height="13" viewBox="0 0 11 13" ><path d="M0.500 0.300v12.400L10.300 6.500z" fill="#acacb0"/></svg><svg style="left:46.0px;top:991.15px" width="20" height="20" viewBox="0 0 22 22" ><rect x=".7" y=".7" width="20.600" height="20.600" fill="#3e2f20" stroke="#c4a270" stroke-width="1.400"/><circle cx="11" cy="11" r="8.500" fill="#6a5136" opacity=".55"/>
<rect x="9.600" y="3.700" width="2.800" height="3" rx=".5" transform="rotate(0 11 11)" fill="#fdf8f0"/><rect x="9.600" y="3.700" width="2.800" height="3" rx=".5" transform="rotate(45 11 11)" fill="#fdf8f0"/><rect x="9.600" y="3.700" width="2.800" height="3" rx=".5" transform="rotate(90 11 11)" fill="#fdf8f0"/><rect x="9.600" y="3.700" width="2.800" height="3" rx=".5" transform="rotate(135 11 11)" fill="#fdf8f0"/><rect x="9.600" y="3.700" width="2.800" height="3" rx=".5" transform="rotate(180 11 11)" fill="#fdf8f0"/><rect x="9.600" y="3.700" width="2.800" height="3" rx=".5" transform="rotate(225 11 11)" fill="#fdf8f0"/><rect x="9.600" y="3.700" width="2.800" height="3" rx=".5" transform="rotate(270 11 11)" fill="#fdf8f0"/><rect x="9.600" y="3.700" width="2.800" height="3" rx=".5" transform="rotate(315 11 11)" fill="#fdf8f0"/><circle cx="11" cy="11" r="5.600" fill="#fdf8f0"/><circle cx="11" cy="11" r="2.500" fill="#4a3724"/></svg><span class="t" style="left:71.6px;top:991px;line-height:21px;font-size:16.3px;color:#fff;letter-spacing:0.179px;transform:scaleY(0.96);">libdispatch.dylib</span><span class="t" style="left:196.1px;top:991px;line-height:21px;font-size:16.3px;color:#a3a3a8;letter-spacing:0.317px;transform:scaleY(0.96);">(105)</span><svg style="left:29.0px;top:1022.58px" width="11" height="13" viewBox="0 0 11 13" ><path d="M0.500 0.300v12.400L10.300 6.500z" fill="#acacb0"/></svg><svg style="left:46.0px;top:1018.88px" width="20" height="20" viewBox="0 0 22 22" ><rect x=".7" y=".7" width="20.600" height="20.600" fill="#3e2f20" stroke="#c4a270" stroke-width="1.400"/><circle cx="11" cy="11" r="8.500" fill="#6a5136" opacity=".55"/>
<rect x="9.600" y="3.700" width="2.800" height="3" rx=".5" transform="rotate(0 11 11)" fill="#fdf8f0"/><rect x="9.600" y="3.700" width="2.800" height="3" rx=".5" transform="rotate(45 11 11)" fill="#fdf8f0"/><rect x="9.600" y="3.700" width="2.800" height="3" rx=".5" transform="rotate(90 11 11)" fill="#fdf8f0"/><rect x="9.600" y="3.700" width="2.800" height="3" rx=".5" transform="rotate(135 11 11)" fill="#fdf8f0"/><rect x="9.600" y="3.700" width="2.800" height="3" rx=".5" transform="rotate(180 11 11)" fill="#fdf8f0"/><rect x="9.600" y="3.700" width="2.800" height="3" rx=".5" transform="rotate(225 11 11)" fill="#fdf8f0"/><rect x="9.600" y="3.700" width="2.800" height="3" rx=".5" transform="rotate(270 11 11)" fill="#fdf8f0"/><rect x="9.600" y="3.700" width="2.800" height="3" rx=".5" transform="rotate(315 11 11)" fill="#fdf8f0"/><circle cx="11" cy="11" r="5.600" fill="#fdf8f0"/><circle cx="11" cy="11" r="2.500" fill="#4a3724"/></svg><span class="t" style="left:71.6px;top:1019px;line-height:21px;font-size:16.3px;color:#fff;letter-spacing:0.124px;transform:scaleY(0.96);">libicucore.A.dylib</span><span class="t" style="left:202.5px;top:1019px;line-height:21px;font-size:16.3px;color:#a3a3a8;letter-spacing:0.083px;transform:scaleY(0.96);">(39)</span><svg style="left:29.0px;top:1050.31px" width="11" height="13" viewBox="0 0 11 13" ><path d="M0.500 0.300v12.400L10.300 6.500z" fill="#acacb0"/></svg><svg style="left:46.0px;top:1046.61px" width="20" height="20" viewBox="0 0 22 22" ><rect x=".7" y=".7" width="20.600" height="20.600" fill="#3e2f20" stroke="#c4a270" stroke-width="1.400"/><circle cx="11" cy="11" r="8.500" fill="#6a5136" opacity=".55"/>
<rect x="9.600" y="3.700" width="2.800" height="3" rx=".5" transform="rotate(0 11 11)" fill="#fdf8f0"/><rect x="9.600" y="3.700" width="2.800" height="3" rx=".5" transform="rotate(45 11 11)" fill="#fdf8f0"/><rect x="9.600" y="3.700" width="2.800" height="3" rx=".5" transform="rotate(90 11 11)" fill="#fdf8f0"/><rect x="9.600" y="3.700" width="2.800" height="3" rx=".5" transform="rotate(135 11 11)" fill="#fdf8f0"/><rect x="9.600" y="3.700" width="2.800" height="3" rx=".5" transform="rotate(180 11 11)" fill="#fdf8f0"/><rect x="9.600" y="3.700" width="2.800" height="3" rx=".5" transform="rotate(225 11 11)" fill="#fdf8f0"/><rect x="9.600" y="3.700" width="2.800" height="3" rx=".5" transform="rotate(270 11 11)" fill="#fdf8f0"/><rect x="9.600" y="3.700" width="2.800" height="3" rx=".5" transform="rotate(315 11 11)" fill="#fdf8f0"/><circle cx="11" cy="11" r="5.600" fill="#fdf8f0"/><circle cx="11" cy="11" r="2.500" fill="#4a3724"/></svg><span class="t" style="left:71.6px;top:1047px;line-height:21px;font-size:16.3px;color:#fff;letter-spacing:0.129px;transform:scaleY(0.96);">libobjc.A.dylib</span><span class="t" style="left:179.6px;top:1047px;line-height:21px;font-size:16.3px;color:#a3a3a8;letter-spacing:-0.169px;transform:scaleY(0.96);">(3)</span><svg style="left:29.0px;top:1078.04px" width="11" height="13" viewBox="0 0 11 13" ><path d="M0.500 0.300v12.400L10.300 6.500z" fill="#acacb0"/></svg><svg style="left:46.0px;top:1074.34px" width="20" height="20" viewBox="0 0 22 22" ><rect x=".7" y=".7" width="20.600" height="20.600" fill="#3e2f20" stroke="#c4a270" stroke-width="1.400"/><circle cx="11" cy="11" r="8.500" fill="#6a5136" opacity=".55"/>
<rect x="9.600" y="3.700" width="2.800" height="3" rx=".5" transform="rotate(0 11 11)" fill="#fdf8f0"/><rect x="9.600" y="3.700" width="2.800" height="3" rx=".5" transform="rotate(45 11 11)" fill="#fdf8f0"/><rect x="9.600" y="3.700" width="2.800" height="3" rx=".5" transform="rotate(90 11 11)" fill="#fdf8f0"/><rect x="9.600" y="3.700" width="2.800" height="3" rx=".5" transform="rotate(135 11 11)" fill="#fdf8f0"/><rect x="9.600" y="3.700" width="2.800" height="3" rx=".5" transform="rotate(180 11 11)" fill="#fdf8f0"/><rect x="9.600" y="3.700" width="2.800" height="3" rx=".5" transform="rotate(225 11 11)" fill="#fdf8f0"/><rect x="9.600" y="3.700" width="2.800" height="3" rx=".5" transform="rotate(270 11 11)" fill="#fdf8f0"/><rect x="9.600" y="3.700" width="2.800" height="3" rx=".5" transform="rotate(315 11 11)" fill="#fdf8f0"/><circle cx="11" cy="11" r="5.600" fill="#fdf8f0"/><circle cx="11" cy="11" r="2.500" fill="#4a3724"/></svg><span class="t" style="left:71.6px;top:1075px;line-height:21px;font-size:16.3px;color:#fff;letter-spacing:0.233px;transform:scaleY(0.96);">libprotobuf.dylib</span><span class="t" style="left:196.1px;top:1075px;line-height:21px;font-size:16.3px;color:#a3a3a8;letter-spacing:0.083px;transform:scaleY(0.96);">(22)</span><svg style="left:29.0px;top:1105.77px" width="11" height="13" viewBox="0 0 11 13" ><path d="M0.500 0.300v12.400L10.300 6.500z" fill="#acacb0"/></svg><svg style="left:46.0px;top:1102.07px" width="20" height="20" viewBox="0 0 22 22" ><rect x=".7" y=".7" width="20.600" height="20.600" fill="#3e2f20" stroke="#c4a270" stroke-width="1.400"/><circle cx="11" cy="11" r="8.500" fill="#6a5136" opacity=".55"/>
<rect x="9.600" y="3.700" width="2.800" height="3" rx=".5" transform="rotate(0 11 11)" fill="#fdf8f0"/><rect x="9.600" y="3.700" width="2.800" height="3" rx=".5" transform="rotate(45 11 11)" fill="#fdf8f0"/><rect x="9.600" y="3.700" width="2.800" height="3" rx=".5" transform="rotate(90 11 11)" fill="#fdf8f0"/><rect x="9.600" y="3.700" width="2.800" height="3" rx=".5" transform="rotate(135 11 11)" fill="#fdf8f0"/><rect x="9.600" y="3.700" width="2.800" height="3" rx=".5" transform="rotate(180 11 11)" fill="#fdf8f0"/><rect x="9.600" y="3.700" width="2.800" height="3" rx=".5" transform="rotate(225 11 11)" fill="#fdf8f0"/><rect x="9.600" y="3.700" width="2.800" height="3" rx=".5" transform="rotate(270 11 11)" fill="#fdf8f0"/><rect x="9.600" y="3.700" width="2.800" height="3" rx=".5" transform="rotate(315 11 11)" fill="#fdf8f0"/><circle cx="11" cy="11" r="5.600" fill="#fdf8f0"/><circle cx="11" cy="11" r="2.500" fill="#4a3724"/></svg><span class="t" style="left:71.6px;top:1102px;line-height:21px;font-size:16.3px;color:#fff;letter-spacing:0.032px;transform:scaleY(0.96);">libsystem_trace.dylib</span><span class="t" style="left:229.9px;top:1102px;line-height:21px;font-size:16.3px;color:#a3a3a8;letter-spacing:0.083px;transform:scaleY(0.96);">(19)</span><svg style="left:29.0px;top:1133.5px" width="11" height="13" viewBox="0 0 11 13" ><path d="M0.500 0.300v12.400L10.300 6.500z" fill="#acacb0"/></svg><svg style="left:46.0px;top:1129.8px" width="20" height="20" viewBox="0 0 22 22" ><rect x=".7" y=".7" width="20.600" height="20.600" fill="#3e2f20" stroke="#c4a270" stroke-width="1.400"/><circle cx="11" cy="11" r="8.500" fill="#6a5136" opacity=".55"/>
<rect x="9.600" y="3.700" width="2.800" height="3" rx=".5" transform="rotate(0 11 11)" fill="#fdf8f0"/><rect x="9.600" y="3.700" width="2.800" height="3" rx=".5" transform="rotate(45 11 11)" fill="#fdf8f0"/><rect x="9.600" y="3.700" width="2.800" height="3" rx=".5" transform="rotate(90 11 11)" fill="#fdf8f0"/><rect x="9.600" y="3.700" width="2.800" height="3" rx=".5" transform="rotate(135 11 11)" fill="#fdf8f0"/><rect x="9.600" y="3.700" width="2.800" height="3" rx=".5" transform="rotate(180 11 11)" fill="#fdf8f0"/><rect x="9.600" y="3.700" width="2.800" height="3" rx=".5" transform="rotate(225 11 11)" fill="#fdf8f0"/><rect x="9.600" y="3.700" width="2.800" height="3" rx=".5" transform="rotate(270 11 11)" fill="#fdf8f0"/><rect x="9.600" y="3.700" width="2.800" height="3" rx=".5" transform="rotate(315 11 11)" fill="#fdf8f0"/><circle cx="11" cy="11" r="5.600" fill="#fdf8f0"/><circle cx="11" cy="11" r="2.500" fill="#4a3724"/></svg><span class="t" style="left:71.6px;top:1130px;line-height:21px;font-size:16.3px;color:#fff;letter-spacing:0.13px;transform:scaleY(0.96);">libxpc.dylib</span><span class="t" style="left:159.3px;top:1130px;line-height:21px;font-size:16.3px;color:#a3a3a8;letter-spacing:0.083px;transform:scaleY(0.96);">(18)</span><svg style="left:29.0px;top:1161.23px" width="11" height="13" viewBox="0 0 11 13" ><path d="M0.500 0.300v12.400L10.300 6.500z" fill="#acacb0"/></svg><svg style="left:46.0px;top:1157.53px" width="20" height="20" viewBox="0 0 22 22" ><rect x=".5" y=".5" width="21" height="21" fill="#0b50ae" stroke="#0d4c9f" stroke-width="1"/><rect x="1.600" y="1.600" width="18.800" height="18.800" fill="none" stroke="#2580e4" stroke-width="1.300"/>
<path d="M11 3.4c2.3 0 3.7 1.7 3.7 4 0 1.7-.8 3.3-1.8 4.1v1.1c2.4.7 5.3 1.9 5.8 5.3v1.6H3.300v-1.6c.5-3.400 3.400-4.600 5.800-5.300v-1.100c-1-.8-1.800-2.400-1.800-4.100 0-2.300 1.400-4 3.700-4z" fill="#fff"/><path d="M3.3 19.500h15.400" stroke="#bcd9f7" stroke-width="1.2"/></svg><span class="t" style="left:71.6px;top:1158px;line-height:21px;font-size:16.3px;color:#fff;letter-spacing:-0.096px;transform:scaleY(0.96);">QuartzCore</span><span class="t" style="left:161.3px;top:1158px;line-height:21px;font-size:16.3px;color:#a3a3a8;letter-spacing:-0.169px;transform:scaleY(0.96);">(3)</span><svg style="left:29.0px;top:1188.96px" width="11" height="13" viewBox="0 0 11 13" ><path d="M0.500 0.300v12.400L10.300 6.500z" fill="#acacb0"/></svg><svg style="left:46.0px;top:1185.26px" width="20" height="20" viewBox="0 0 22 22" ><rect x=".5" y=".5" width="21" height="21" fill="#0b50ae" stroke="#0d4c9f" stroke-width="1"/><rect x="1.600" y="1.600" width="18.800" height="18.800" fill="none" stroke="#2580e4" stroke-width="1.300"/>
<path d="M11 3.4c2.3 0 3.7 1.7 3.7 4 0 1.7-.8 3.3-1.8 4.1v1.1c2.4.7 5.3 1.9 5.8 5.3v1.6H3.300v-1.6c.5-3.400 3.400-4.600 5.800-5.300v-1.100c-1-.8-1.800-2.400-1.800-4.100 0-2.300 1.400-4 3.700-4z" fill="#fff"/><path d="M3.3 19.500h15.400" stroke="#bcd9f7" stroke-width="1.2"/></svg><span class="t" style="left:71.6px;top:1185px;line-height:21px;font-size:16.3px;color:#fff;letter-spacing:-0.172px;transform:scaleY(0.96);">UIFoundation</span><span class="t" style="left:173.8px;top:1185px;line-height:21px;font-size:16.3px;color:#a3a3a8;letter-spacing:0.083px;transform:scaleY(0.96);">(21)</span><svg style="left:29.0px;top:1216.69px" width="11" height="13" viewBox="0 0 11 13" ><path d="M0.500 0.300v12.400L10.300 6.500z" fill="#acacb0"/></svg><svg style="left:46.0px;top:1212.99px" width="20" height="20" viewBox="0 0 22 22" ><rect x=".5" y=".5" width="21" height="21" fill="#0b50ae" stroke="#0d4c9f" stroke-width="1"/><rect x="1.600" y="1.600" width="18.800" height="18.800" fill="none" stroke="#2580e4" stroke-width="1.300"/>
<path d="M11 3.4c2.3 0 3.7 1.7 3.7 4 0 1.7-.8 3.3-1.8 4.1v1.1c2.4.7 5.3 1.9 5.8 5.3v1.6H3.300v-1.6c.5-3.400 3.400-4.600 5.800-5.300v-1.100c-1-.8-1.800-2.400-1.800-4.100 0-2.300 1.400-4 3.700-4z" fill="#fff"/><path d="M3.3 19.500h15.400" stroke="#bcd9f7" stroke-width="1.2"/></svg><span class="t" style="left:71.6px;top:1213px;line-height:21px;font-size:16.3px;color:#fff;letter-spacing:-0.209px;transform:scaleY(0.96);">UIKitCore</span><span class="t" style="left:146.8px;top:1213px;line-height:21px;font-size:16.3px;color:#a3a3a8;letter-spacing:-0.169px;transform:scaleY(0.96);">(4)</span><svg style="left:29.0px;top:1244.42px" width="11" height="13" viewBox="0 0 11 13" ><path d="M0.500 0.300v12.400L10.300 6.500z" fill="#acacb0"/></svg><svg style="left:45.8px;top:1240.42px" width="20.6" height="20.6" viewBox="0 0 22 22" ><rect x=".6" y=".6" width="20.800" height="20.800" fill="#8a6a1e" stroke="#d6b24a" stroke-width="1.200"/><rect x="3.500" y="4" width="15" height="3.800" fill="#fbe27a"/><rect x="3.500" y="9.500" width="6.500" height="3.800" fill="#fbe27a"/><rect x="12" y="9.500" width="6.500" height="3.800" fill="#fbe27a"/><rect x="3.500" y="15" width="15" height="3.500" fill="#fbe27a"/></svg><span class="t" style="left:71.6px;top:1241px;line-height:21px;font-size:16.3px;color:#fff;letter-spacing:-0.118px;transform:scaleY(0.96);">Foundation</span><span class="t" style="left:158.4px;top:1241px;line-height:21px;font-size:16.3px;color:#a3a3a8;letter-spacing:0.32px;transform:scaleY(0.96);">(1208)</span><div class="" style="left:610px;top:93px;width:21.3px;height:1160.5px;background:#3a3a3e;border-left:1px solid #47474c"></div><div class="" style="left:615.9px;top:98px;width:11.1px;height:658px;background:#8e8e93;border-radius:5.600px"></div><div class="" style="left:0px;top:1253.5px;width:631.3px;height:40.5px;background:#2e2d32;border-top:1px solid #3d3d41"></div><div class="" style="left:8px;top:1259.2px;width:615.8px;height:29.8px;background:#5b5b60;border-radius:6px"></div><svg style="left:14.3px;top:1265.3px" width="18" height="18" viewBox="0 0 18 18" ><circle cx="9" cy="9" r="8" fill="none" stroke="#c4c4c8" stroke-width="1.300"/><path d="M4.300 6.300h9.400M5.800 9.300h6.400M7.500 12.300h3" stroke="#c4c4c8" stroke-width="1.300"/></svg><span class="t" style="left:37.8px;top:1264px;line-height:21px;font-size:16.3px;color:#a4a4a9;letter-spacing:0.035px;transform:scaleY(0.96);">Filter</span><svg style="left:574.4px;top:1265.6px" width="18" height="18" viewBox="0 0 18 18" ><rect x=".8" y=".8" width="16.200" height="15.700" fill="none" stroke="#c8c8cc" stroke-width="1.300"/><path d="M8.900 4v6.300M8.900 11.800v1.700" stroke="#c8c8cc" stroke-width="1.400"/></svg><svg style="left:600.8px;top:1265.3px" width="14" height="18" viewBox="0 0 14 18" ><path d="M.8.800h7.700l4.500 4.500v11.400H.8z" fill="none" stroke="#c8c8cc" stroke-width="1.300"/><path d="M8.300.8v4.700h4.700" fill="none" stroke="#c8c8cc" stroke-width="1.200"/></svg><svg style="left:642.5px;top:63.5px" width="20" height="20" viewBox="0 0 20 20" ><g fill="none" stroke="#a9a9ad" stroke-width="1.300"><rect x="1" y="1" width="7" height="7"/><rect x="11.500" y="1" width="7" height="7"/><rect x="1" y="11.500" width="7" height="7"/><rect x="11.500" y="11.500" width="7" height="7"/><path d="M8 4.500h3.500M15 8v3.500M4.500 8v3.500M8 15h3.500"/></g></svg><svg style="left:678px;top:64px" width="13" height="19" viewBox="0 0 13 19" ><path d="M10.500 1.500L2.500 9.500l8 8" fill="none" stroke="#f2f2f2" stroke-width="2"/></svg><svg style="left:710.5px;top:64px" width="13" height="19" viewBox="0 0 13 19" ><path d="M2.500 1.500l8 8-8 8" fill="none" stroke="#5f5f63" stroke-width="2"/></svg><svg style="left:738.9px;top:62.2px" width="22.2" height="22.2" viewBox="0 0 22 22" ><rect x=".5" y=".5" width="21" height="21" rx="5" fill="#f4f4f4"/><path d="M3.0 1.500v19M1.500 3.0h19" stroke="#a9a9a9" stroke-width=".55"/><path d="M5.3 1.500v19M1.500 5.3h19" stroke="#a9a9a9" stroke-width=".55"/><path d="M7.6 1.500v19M1.500 7.6h19" stroke="#a9a9a9" stroke-width=".55"/><path d="M9.899999999999999 1.500v19M1.500 9.899999999999999h19" stroke="#a9a9a9" stroke-width=".55"/><path d="M12.2 1.500v19M1.500 12.2h19" stroke="#a9a9a9" stroke-width=".55"/><path d="M14.5 1.500v19M1.500 14.5h19" stroke="#a9a9a9" stroke-width=".55"/><path d="M16.799999999999997 1.500v19M1.500 16.799999999999997h19" stroke="#a9a9a9" stroke-width=".55"/><path d="M19.099999999999998 1.500v19M1.500 19.099999999999998h19" stroke="#a9a9a9" stroke-width=".55"/><circle cx="11" cy="11" r="6.500" fill="none" stroke="#a9a9a9" stroke-width=".6"/><circle cx="11" cy="11" r="3" fill="none" stroke="#a9a9a9" stroke-width=".6"/><rect x=".5" y=".5" width="21" height="21" rx="5" fill="none" stroke="#e0e0e0" stroke-width="1"/></svg><span class="t" style="left:767.4px;top:63px;line-height:21px;font-size:16.3px;color:#fff;letter-spacing:-0.27px;transform:scaleY(0.96);">ValidateIAP</span><svg style="left:853.2px;top:62.5px" width="9" height="21" viewBox="0 0 9 21" ><path d="M1.200 1L7.300 10.500 1.200 20" fill="none" stroke="#8c8c90" stroke-width="1.300"/></svg><svg style="left:867.6px;top:63px" width="20.6" height="20.6" viewBox="0 0 22 22" ><rect x=".5" y=".5" width="21" height="21" fill="#0b50ae" stroke="#0d4c9f" stroke-width="1"/><rect x="1.600" y="1.600" width="18.800" height="18.800" fill="none" stroke="#2580e4" stroke-width="1.300"/>
<path d="M11 3.4c2.3 0 3.7 1.7 3.7 4 0 1.7-.8 3.3-1.8 4.1v1.1c2.4.7 5.3 1.9 5.8 5.3v1.6H3.300v-1.6c.5-3.400 3.400-4.600 5.800-5.300v-1.100c-1-.8-1.800-2.400-1.800-4.100 0-2.300 1.400-4 3.700-4z" fill="#fff"/><path d="M3.3 19.500h15.400" stroke="#bcd9f7" stroke-width="1.2"/></svg><span class="t" style="left:894.8px;top:63px;line-height:21px;font-size:16.3px;color:#fff;letter-spacing:-0.27px;transform:scaleY(0.96);">ValidateIAP</span><svg style="left:980.5px;top:62.5px" width="9" height="21" viewBox="0 0 9 21" ><path d="M1.200 1L7.300 10.500 1.200 20" fill="none" stroke="#8c8c90" stroke-width="1.300"/></svg><svg style="left:994px;top:62.3px" width="22" height="22" viewBox="0 0 22 22" ><circle cx="11" cy="11" r="10.700" fill="#fcc81a"/><rect x="5.800" y="5.600" width="10.400" height="10.800" fill="#fff6dc"/><path d="M5.800 8.200h10.400M5.800 10.900h10.400M5.800 13.600h10.400" stroke="#f3cf7a" stroke-width=".8"/></svg><span class="t" style="left:1022.4px;top:63px;line-height:21px;font-size:16.3px;color:#fff;letter-spacing:-0.176px;transform:scaleY(0.96);">Products…ontroller</span><svg style="left:1170.5px;top:62.5px" width="9" height="21" viewBox="0 0 9 21" ><path d="M1.200 1L7.300 10.500 1.200 20" fill="none" stroke="#8c8c90" stroke-width="1.300"/></svg><svg style="left:1183.7px;top:62.3px" width="22" height="22" viewBox="0 0 22 22" ><circle cx="11" cy="11" r="10.700" fill="#fcc81a"/><rect x="5.800" y="5.600" width="10.400" height="10.800" fill="#fff6dc"/><path d="M5.800 8.200h10.400M5.800 10.900h10.400M5.800 13.600h10.400" stroke="#f3cf7a" stroke-width=".8"/></svg><span class="t" style="left:1211.8px;top:63px;line-height:21px;font-size:16.3px;color:#fff;letter-spacing:0.684px;transform:scaleY(0.96);">0x7fc93d4077d0</span><svg style="left:1346.8px;top:62.5px" width="9" height="21" viewBox="0 0 9 21" ><path d="M1.200 1L7.300 10.500 1.200 20" fill="none" stroke="#8c8c90" stroke-width="1.300"/></svg><svg style="left:1360.2px;top:62.3px" width="21.5" height="21.5" viewBox="0 0 22 22" ><rect x=".6" y=".6" width="20.800" height="20.800" fill="#a9c8e4" stroke="#cfe2f3" stroke-width="1.200"/><rect x="2.500" y="2.500" width="17" height="17" fill="none" stroke="#bcd6ec" stroke-width=".8" stroke-dasharray="1.500 1"/><rect x="5.200" y="9.800" width="2.600" height="2.600" fill="#fff"/><rect x="9.700" y="9.800" width="2.600" height="2.600" fill="#fff"/><rect x="14.200" y="9.800" width="2.600" height="2.600" fill="#fff"/></svg><span class="t" style="left:1387.6px;top:63px;line-height:21px;font-size:16.3px;color:#fff;letter-spacing:0.575px;transform:scaleY(0.96);">0x6000004aac70</span><svg style="left:633px;top:93px" width="900" height="1121" viewBox="710 145 900 1121"><path d="M880.3 496.5H908.5M900.2 488.6L908.5 496.5L900.2 504.4" fill="none" stroke="#848484" stroke-width="2.700" stroke-linejoin="miter"/><path d="M880.3 563H908.5M900.2 555.1L908.5 563L900.2 570.9" fill="none" stroke="#848484" stroke-width="2.700" stroke-linejoin="miter"/><path d="M880.3 629H908.5M900.2 621.1L908.5 629L900.2 636.9" fill="none" stroke="#848484" stroke-width="2.700" stroke-linejoin="miter"/><path d="M979.600 496.500H994.200V563H979.600" fill="none" stroke="#848484" stroke-width="2.700"/><path d="M994.2 529.6H1007M998.7 521.7L1007 529.6L998.7 537.5" fill="none" stroke="#848484" stroke-width="2.700" stroke-linejoin="miter"/><path d="M979.6 629H1007M998.7 621.1L1007 629L998.7 636.9" fill="none" stroke="#848484" stroke-width="2.700" stroke-linejoin="miter"/><path d="M1079.300 529.600H1093V695.200H1079.300" fill="none" stroke="#848484" stroke-width="2.700"/><path d="M1079.300 629H1093" fill="none" stroke="#9a9a9a" stroke-width="2.700"/><path d="M1093 612.6H1106.8M1098.5 604.7L1106.8 612.6L1098.5 620.5" fill="none" stroke="#848484" stroke-width="2.700" stroke-linejoin="miter"/><path d="M1192.800 687V761.500H1178.700" fill="none" stroke="#848484" stroke-width="2.700"/><path d="M1178.700 612.600H1192.800V688.300" fill="none" stroke="#a8a8a8" stroke-width="2.700"/><path d="M1192.8 687H1206.5M1198.2 679.1L1206.5 687L1198.2 694.9" fill="none" stroke="#a8a8a8" stroke-width="2.700" stroke-linejoin="miter"/><path d="M894.900 709.500V828H880.300" fill="none" stroke="#848484" stroke-width="2.700"/><path d="M880.3 761.5H908.5M900.2 753.6L908.5 761.5L900.2 769.4" fill="none" stroke="#848484" stroke-width="2.700" stroke-linejoin="miter"/><path d="M979.6 761.5H1007M998.7 753.6L1007 761.5L998.7 769.4" fill="none" stroke="#848484" stroke-width="2.700" stroke-linejoin="miter"/><path d="M1079.3 761.5H1106.8M1098.5 753.6L1106.8 761.5L1098.5 769.4" fill="none" stroke="#848484" stroke-width="2.700" stroke-linejoin="miter"/><path d="M1277.5 687H1305.5M1297.2 679.1L1305.5 687L1297.2 694.9" fill="none" stroke="#a8a8a8" stroke-width="2.700" stroke-linejoin="miter"/><path d="M1376.8 687H1405.5M1397.2 679.1L1405.5 687L1397.2 694.9" fill="none" stroke="#a8a8a8" stroke-width="2.700" stroke-linejoin="miter"/><path d="M1476.3 687H1504.3M1496.0 679.1L1504.3 687L1496.0 694.9" fill="none" stroke="#a8a8a8" stroke-width="2.700" stroke-linejoin="miter"/><path d="M843.8 468.9L816.8 504.9L843.8 524.5z" fill="#adcbe3"/><path d="M843.8 468.9L870.8 504.9L843.8 524.5z" fill="#bcd7ec"/><path d="M843.8 468.9L816.8 504.9L843.8 524.5L870.8 504.9z M843.8 468.9V524.5" fill="none" stroke="#f4f9fd" stroke-width="1.400" stroke-linejoin="round"/><path d="M843.8 535L816.8 571L843.8 590.6z" fill="#adcbe3"/><path d="M843.8 535L870.8 571L843.8 590.6z" fill="#bcd7ec"/><path d="M843.8 535L816.8 571L843.8 590.6L870.8 571z M843.8 535V590.6" fill="none" stroke="#f4f9fd" stroke-width="1.400" stroke-linejoin="round"/><path d="M843.8 601.6L816.8 637.6L843.8 657.2z" fill="#adcbe3"/><path d="M843.8 601.6L870.8 637.6L843.8 657.2z" fill="#bcd7ec"/><path d="M843.8 601.6L816.8 637.6L843.8 657.2L870.8 637.6z M843.8 601.6V657.2" fill="none" stroke="#f4f9fd" stroke-width="1.400" stroke-linejoin="round"/><path d="M843.8 800L816.8 836L843.8 855.6z" fill="#adcbe3"/><path d="M843.8 800L870.8 836L843.8 855.6z" fill="#bcd7ec"/><path d="M843.8 800L816.8 836L843.8 855.6L870.8 836z M843.8 800V855.6" fill="none" stroke="#f4f9fd" stroke-width="1.400" stroke-linejoin="round"/><path d="M943.2 468.9L916.2 504.9L943.2 524.5z" fill="#adcbe3"/><path d="M943.2 468.9L970.2 504.9L943.2 524.5z" fill="#bcd7ec"/><path d="M943.2 468.9L916.2 504.9L943.2 524.5L970.2 504.9z M943.2 468.9V524.5" fill="none" stroke="#f4f9fd" stroke-width="1.400" stroke-linejoin="round"/><path d="M943.2 601.6L916.2 637.6L943.2 657.2z" fill="#adcbe3"/><path d="M943.2 601.6L970.2 637.6L943.2 657.2z" fill="#bcd7ec"/><path d="M943.2 601.6L916.2 637.6L943.2 657.2L970.2 637.6z M943.2 601.6V657.2" fill="none" stroke="#f4f9fd" stroke-width="1.400" stroke-linejoin="round"/><path d="M1042.8 502.3L1015.8 538.3L1042.8 557.9z" fill="#adcbe3"/><path d="M1042.8 502.3L1069.8 538.3L1042.8 557.9z" fill="#bcd7ec"/><path d="M1042.8 502.3L1015.8 538.3L1042.8 557.9L1069.8 538.3z M1042.8 502.3V557.9" fill="none" stroke="#f4f9fd" stroke-width="1.400" stroke-linejoin="round"/><path d="M1142.2 734L1115.2 770L1142.2 789.6z" fill="#adcbe3"/><path d="M1142.2 734L1169.2 770L1142.2 789.6z" fill="#bcd7ec"/><path d="M1142.2 734L1115.2 770L1142.2 789.6L1169.2 770z M1142.2 734V789.6" fill="none" stroke="#f4f9fd" stroke-width="1.400" stroke-linejoin="round"/><circle cx="820.4" cy="472.5" r="11.300" fill="#404040" stroke="#6b6b6b" stroke-width="1.500"/><path d="M814.9 467.0L825.9 478.0M814.9 471.5v-4.500h4.500M825.9 473.5v4.500h-4.500" fill="none" stroke="#6b6b6b" stroke-width="1.400"/><circle cx="820.4" cy="539.4" r="11.300" fill="#404040" stroke="#6b6b6b" stroke-width="1.500"/><path d="M814.9 533.9L825.9 544.9M814.9 538.4v-4.500h4.500M825.9 540.4v4.500h-4.500" fill="none" stroke="#6b6b6b" stroke-width="1.400"/><circle cx="820.4" cy="606.2" r="11.300" fill="#404040" stroke="#6b6b6b" stroke-width="1.500"/><path d="M814.9 600.7L825.9 611.7M814.9 605.2v-4.500h4.500M825.9 607.2v4.500h-4.500" fill="none" stroke="#6b6b6b" stroke-width="1.400"/><circle cx="820.4" cy="803.7" r="11.300" fill="#404040" stroke="#6b6b6b" stroke-width="1.500"/><path d="M814.9 798.2L825.9 809.2M814.9 802.7v-4.500h4.500M825.9 804.7v4.500h-4.500" fill="none" stroke="#6b6b6b" stroke-width="1.400"/><path d="M847.63 734.69L868.49 746.79L839.6 755.11L819.51 743.59z" fill="#fdd000"/><path d="M819.51 743.59L839.6 755.11L839.6 788.31L819.51 772.54z" fill="#fdc900"/><path d="M839.6 755.11L868.49 746.79L868.49 776.5L839.6 788.31z" fill="#fecd00"/><path d="M847.63 734.69L868.49 746.79L868.49 776.5L839.6 788.31L819.51 772.54L819.51 743.59zM819.51 743.59L839.6 755.11L868.49 746.79M839.6 755.11L839.6 788.31" fill="none" stroke="#fff3c4" stroke-width="1.900" stroke-linejoin="round"/><circle cx="820.4" cy="737" r="11.300" fill="#404040" stroke="#6b6b6b" stroke-width="1.500"/><path d="M814.9 731.5L825.9 742.5M814.9 736v-4.500h4.500M825.9 738v4.500h-4.500" fill="none" stroke="#6b6b6b" stroke-width="1.400"/><path d="M947.03 734.69L967.89 746.79L939.0 755.11L918.91 743.59z" fill="#fdd000"/><path d="M918.91 743.59L939.0 755.11L939.0 788.31L918.91 772.54z" fill="#fdc900"/><path d="M939.0 755.11L967.89 746.79L967.89 776.5L939.0 788.31z" fill="#fecd00"/><path d="M947.03 734.69L967.89 746.79L967.89 776.5L939.0 788.31L918.91 772.54L918.91 743.59zM918.91 743.59L939.0 755.11L967.89 746.79M939.0 755.11L939.0 788.31" fill="none" stroke="#fff3c4" stroke-width="1.900" stroke-linejoin="round"/><circle cx="844.400" cy="695.400" r="25.200" fill="#7ba3e6" stroke="#9fbdf0" stroke-width="2"/><rect x="835.900" y="680" width="4.800" height="31.500" fill="#fff"/><rect x="842.450" y="674.600" width="4.700" height="42" fill="#fff"/><rect x="848.600" y="680" width="4.600" height="31.500" fill="#fff"/><circle cx="886.100" cy="695.200" r="14" fill="#404040" stroke="#868686" stroke-width="2.100"/><text x="886.100" y="700.800" text-anchor="middle" font-size="15.500" fill="#9c9c9c" font-family="Liberation Sans,sans-serif">6</text><rect x="918.300" y="537.200" width="45" height="45" fill="#e3e3e3" stroke="#bdbdbd" stroke-width=".8"/><rect x="924.300" y="543.300" width="45.300" height="45.600" fill="#fff" stroke="#b5b5b5" stroke-width="1"/><path d="M1046.63 602.19L1067.49 614.29L1038.6 622.61L1018.51 611.09z" fill="#2c80ec"/><path d="M1018.51 611.09L1038.6 622.61L1038.6 655.81L1018.51 640.04z" fill="#267bea"/><path d="M1038.6 622.61L1067.49 614.29L1067.49 644.0L1038.6 655.81z" fill="#2277e6"/><path d="M1046.63 602.19L1067.49 614.29L1067.49 644.0L1038.6 655.81L1018.51 640.04L1018.51 611.09zM1018.51 611.09L1038.6 622.61L1067.49 614.29M1038.6 622.61L1038.6 655.81" fill="none" stroke="#f2f7fe" stroke-width="1.900" stroke-linejoin="round"/><rect x="1017.65" y="669.95" width="51.3" height="51.3" fill="#b4d0e8" stroke="#cfe1f1" stroke-width="1.200"/><g transform="translate(1043.500 696) scale(1.170) translate(-1043 -695)"><g fill="#f4f8fc"><path d="M1026 691.300c0-3 4.500-5.400 10-5.400 3 0 5.700.7 7.500 1.900l-1.300 4.800 7.500 1.600v6.600c0 3-4.500 5.400-11.800 5.400s-11.900-2.400-11.900-5.400z"/><path d="M1046.200 685.300c1.500-2 4.500-3 7.800-2.700 3.200.3 5.700 1.700 6.300 3.500v6.500c-.6 1.700-3.500 3-6.800 3l-7.500-1.700z"/></g><path d="M1026 691.300c0 3 5.300 5.400 11.900 5.400s11.800-2.400 11.800-5.400M1046.400 691.500v4.500" fill="none" stroke="#b4d0e8" stroke-width="1.100"/><path d="M1053 687.500v8" stroke="#b4d0e8" stroke-width="1"/></g><rect x="1017.65" y="736.25" width="51.3" height="51.3" fill="#b4d0e8" stroke="#cfe1f1" stroke-width="1.200"/><path d="M1029.8 745.9h-5.500v32h5.500M1056.8 745.9h5.500v32h-5.500" fill="none" stroke="#f2f7fc" stroke-width="2.200"/><rect x="1031.4" y="759.3" width="5.200" height="5.200" fill="#f2f7fc"/><rect x="1040.7" y="759.3" width="5.200" height="5.200" fill="#f2f7fc"/><rect x="1050.0" y="759.3" width="5.200" height="5.200" fill="#f2f7fc"/><rect x="1116.700" y="587.400" width="51.600" height="51" fill="#fff"/><circle cx="1242" cy="687" r="27" fill="#fecb00"/><path d="M1249 672.500L1235 687l14 14.500" fill="none" stroke="#1b73e8" stroke-width="3.400"/><rect x="1308.200" y="654.300" width="65.200" height="65.600" fill="#2f4a74"/><rect x="1315.3500000000001" y="661.55" width="51.7" height="51.7" fill="#b4d0e8" stroke="#c9ddef" stroke-width="1.200"/><path d="M1327.7 671.4h-5.500v32h5.500M1354.7 671.4h5.500v32h-5.500" fill="none" stroke="#f2f7fc" stroke-width="2.200"/><rect x="1329.3000000000002" y="684.8" width="5.200" height="5.200" fill="#f2f7fc"/><rect x="1338.6000000000001" y="684.8" width="5.200" height="5.200" fill="#f2f7fc"/><rect x="1347.9" y="684.8" width="5.200" height="5.200" fill="#f2f7fc"/><path d="M1444.13 660.39L1464.99 672.49L1436.1 680.81L1416.01 669.29z" fill="#fdd000"/><path d="M1416.01 669.29L1436.1 680.81L1436.1 714.01L1416.01 698.24z" fill="#fdc900"/><path d="M1436.1 680.81L1464.99 672.49L1464.99 702.2L1436.1 714.01z" fill="#fecd00"/><path d="M1444.13 660.39L1464.99 672.49L1464.99 702.2L1436.1 714.01L1416.01 698.24L1416.01 669.29zM1416.01 669.29L1436.1 680.81L1464.99 672.49M1436.1 680.81L1436.1 714.01" fill="none" stroke="#fff3c4" stroke-width="1.900" stroke-linejoin="round"/><circle cx="1539.600" cy="687" r="27" fill="#fecb00"/><rect x="1526" y="673" width="27.500" height="28.500" fill="#fff8e6"/><path d="M1526 680h27.500M1526 687h27.500M1526 694h27.500" stroke="#f6d98c" stroke-width="1"/></svg><svg style="left:963px;top:1223px" width="24" height="22" viewBox="0 0 24 22" ><g fill="none" stroke="#5d5e60" stroke-width="1.300"><path d="M2 4c3-1.300 7-1.300 10 .5 3-1.800 7-1.800 10-.5v15c-3-1.300-7-1.300-10 .5-3-1.800-7-1.800-10-.5z"/><path d="M12 4.500v15M8 13h8v-4M13.500 6.800L16 9l2.500-2.200"/></g></svg><svg style="left:1002px;top:1225px" width="20" height="18" viewBox="0 0 20 18" ><g fill="none" stroke="#e4e4e6" stroke-width="1.300"><rect x="1" y="1" width="18" height="16"/><path d="M1 4.500h18M4 8h3M9 8h3M14 8h3M4 11.500h3M9 11.500h3M14 11.500h3M4 14.500h12" stroke-width="1.500"/></g></svg><svg style="left:1039px;top:1224px" width="20" height="20" viewBox="0 0 20 20" ><g fill="none" stroke="#e4e4e6" stroke-width="1.600"><path d="M1 6V1h5M14 1h5v5M19 14v5h-5M6 19H1v-5"/><circle cx="10" cy="10" r="4.200"/></g></svg><div class="" style="left:1104px;top:1233.4px;width:19px;height:1.6px;background:#b9b9bd"></div><div class="" style="left:1141px;top:1230.4px;width:19px;height:1.6px;background:#b9b9bd"></div><div class="" style="left:1141px;top:1236.4px;width:19px;height:1.6px;background:#b9b9bd"></div><div class="" style="left:1178.5px;top:1233.4px;width:19.0px;height:1.6px;background:#d8d8db"></div><div class="" style="left:1187.2px;top:1224.7px;width:1.6px;height:19.0px;background:#d8d8db"></div><svg style="left:642.4px;top:1263.2px" width="24" height="22" viewBox="0 0 24 22" ><g fill="none" stroke="#e9e9eb" stroke-width="1.650"><rect x="1.500" y="3" width="21" height="16"/><path d="M7.500 13.500L12 8.500l4.500 5z"/></g></svg><svg style="left:687px;top:1265.5px" width="24" height="17" viewBox="0 0 24 17" ><path d="M1.500 1.500h14.500l6 7-6 7H1.500z" fill="#1b84f7" stroke="#1b84f7" stroke-width="1.500" stroke-linejoin="round"/></svg><svg style="left:730.6px;top:1263.2px" width="24" height="22" viewBox="0 0 24 22" ><g fill="none" stroke="#e9e9eb" stroke-width="1.650"><rect x="2.500" y="4" width="3.800" height="14"/><path d="M10 4l11 7-11 7z" stroke-linejoin="round"/></g></svg><svg style="left:775.7px;top:1263.2px" width="24" height="22" viewBox="0 0 24 22" ><g fill="none" stroke="#e9e9eb" stroke-width="1.650"><path d="M3 14L12 5l8.500 8.500M14.500 13.800h6.200V7.600"/><rect x="10" y="16" width="4" height="4"/></g></svg><svg style="left:820.2px;top:1263.2px" width="24" height="22" viewBox="0 0 24 22" ><g fill="none" stroke="#e9e9eb" stroke-width="1.650"><path d="M12 1.500v11M7.500 8.500L12 13l4.500-4.500"/><rect x="10" y="16" width="4" height="4"/></g></svg><svg style="left:863.2px;top:1263.2px" width="24" height="22" viewBox="0 0 24 22" ><g fill="none" stroke="#e9e9eb" stroke-width="1.650"><path d="M12 14V3M7.500 7L12 2.500 16.500 7"/><rect x="5.500" y="16.300" width="13" height="3.400"/></g></svg><div class="" style="left:897px;top:1262px;width:1.2px;height:25px;background:#3f4043"></div><svg style="left:908.3px;top:1263.2px" width="24" height="22" viewBox="0 0 24 22" ><g fill="none" stroke="#e9e9eb" stroke-width="1.650"><rect x="6.500" y="2.500" width="11" height="17" rx="1"/><path d="M6.500 5.500H2.500v11h4M17.500 5.500h4v11h-4"/></g></svg><svg style="left:952.8px;top:1263.2px" width="24" height="22" viewBox="0 0 24 22" ><g fill="none" stroke="#e9e9eb" stroke-width="1.650"><circle cx="6" cy="5" r="3.300"/><circle cx="6" cy="17.500" r="3.300"/><circle cx="18.500" cy="11" r="3.300"/><path d="M9 6.500l6.500 3M9 16l6.500-3.500"/></g></svg><svg style="left:996.2px;top:1263.2px" width="24" height="22" viewBox="0 0 24 22" ><g fill="none" stroke="#e9e9eb" stroke-width="1.650"><path d="M21 2L3 10.500l8.500 1.800L13.500 21z" stroke-linejoin="round"/></g></svg><div class="" style="left:1030.2px;top:1262px;width:1.2px;height:25px;background:#3f4043"></div><svg style="left:1041.7px;top:1263.2px" width="21.8" height="21.8" viewBox="0 0 22 22" ><rect x=".5" y=".5" width="21" height="21" rx="5" fill="#f4f4f4"/><path d="M3.0 1.500v19M1.500 3.0h19" stroke="#a9a9a9" stroke-width=".55"/><path d="M5.3 1.500v19M1.500 5.3h19" stroke="#a9a9a9" stroke-width=".55"/><path d="M7.6 1.500v19M1.500 7.6h19" stroke="#a9a9a9" stroke-width=".55"/><path d="M9.899999999999999 1.500v19M1.500 9.899999999999999h19" stroke="#a9a9a9" stroke-width=".55"/><path d="M12.2 1.500v19M1.500 12.2h19" stroke="#a9a9a9" stroke-width=".55"/><path d="M14.5 1.500v19M1.500 14.5h19" stroke="#a9a9a9" stroke-width=".55"/><path d="M16.799999999999997 1.500v19M1.500 16.799999999999997h19" stroke="#a9a9a9" stroke-width=".55"/><path d="M19.099999999999998 1.500v19M1.500 19.099999999999998h19" stroke="#a9a9a9" stroke-width=".55"/><circle cx="11" cy="11" r="6.500" fill="none" stroke="#a9a9a9" stroke-width=".6"/><circle cx="11" cy="11" r="3" fill="none" stroke="#a9a9a9" stroke-width=".6"/><rect x=".5" y=".5" width="21" height="21" rx="5" fill="none" stroke="#e0e0e0" stroke-width="1"/></svg><span class="t" style="left:1069px;top:1264px;line-height:21px;font-size:16.3px;color:#fff;letter-spacing:-0.234px;transform:scaleY(0.96);">ValidateIAP</span><svg style="left:1155.1px;top:1263.7px" width="9" height="21" viewBox="0 0 9 21" ><path d="M1.200 1L7.300 10.500 1.200 20" fill="none" stroke="#d2d2d4" stroke-width="1.300"/></svg><svg style="left:1169px;top:1263.8px" width="21" height="21" viewBox="0 0 21 21" ><circle cx="10.500" cy="10.500" r="9.800" fill="#7ea4e3" stroke="#a9c3ef" stroke-width="1"/><path d="M7.300 5.500v10M10.500 3.500v14M13.700 5.500v10" stroke="#fff" stroke-width="1.700"/></svg><span class="t" style="left:1197.2px;top:1264px;line-height:21px;font-size:16.3px;color:#fff;letter-spacing:-0.371px;transform:scaleY(0.96);">Thread 1</span><svg style="left:1266.1px;top:1263.7px" width="9" height="21" viewBox="0 0 9 21" ><path d="M1.200 1L7.300 10.500 1.200 20" fill="none" stroke="#d2d2d4" stroke-width="1.300"/></svg><svg style="left:1280.9px;top:1264.6px" width="19" height="19" viewBox="0 0 19 19" ><rect x=".6" y=".6" width="17.800" height="17.800" fill="#4a4038" stroke="#7d6b58" stroke-width="1.200"/><circle cx="9.500" cy="9.500" r="4.600" fill="none" stroke="#b9aea2" stroke-width="2.600" stroke-dasharray="2.200 1.400"/><circle cx="9.500" cy="9.500" r="3.300" fill="none" stroke="#b9aea2" stroke-width="1.500"/></svg><span class="t" style="left:1307.1px;top:1264px;line-height:21px;font-size:16.3px;color:#fff;letter-spacing:-0.169px;transform:scaleY(0.96);">0 mach_msg_trap</span><div class="" style="left:1535px;top:92.5px;width:359px;height:1.2px;background:#3d4043"></div><svg style="left:1665.5px;top:64.5px" width="15" height="19" viewBox="0 0 15 19" ><path d="M.8.800h8l5.200 5.200v12.200H.8z" fill="none" stroke="#b9babd" stroke-width="1.300"/><path d="M8.600.8v5.400h5.400" fill="none" stroke="#b9babd" stroke-width="1.200"/></svg><svg style="left:1703.5px;top:64.5px" width="19" height="19" viewBox="0 0 19 19" ><circle cx="9.500" cy="9.500" r="8.500" fill="none" stroke="#b9babd" stroke-width="1.300"/><text x="9.500" y="14" text-anchor="middle" font-size="12.500" fill="#b9babd" font-family="Liberation Sans,sans-serif">?</text></svg><svg style="left:1743px;top:62.5px" width="24" height="24" viewBox="0 0 24 24" ><g fill="#1b84f7" stroke="#1b84f7"><path d="M5.500 5l11 6.500-11 6.500" fill="none" stroke-width="2"/><circle cx="5.500" cy="5" r="3.600"/><circle cx="17.500" cy="11.500" r="4.100"/><circle cx="5.500" cy="18.500" r="3.600"/></g></svg><span class="t" style="left:1540px;top:97px;line-height:20px;font-size:15.2px;color:#fff;font-weight:bold;letter-spacing:-0.128px;">Object</span><span class="t" style="left:1564.81px;top:127px;line-height:19px;font-size:14.4px;color:#e9e9ea;letter-spacing:0.013px;transform:scaleY(0.96);">Class Name</span><span class="t" style="left:1652.3px;top:125px;line-height:21px;font-size:16.3px;color:#fff;letter-spacing:-0.114px;transform:scaleY(0.96);"><span style="font-size:72%">__</span>NSArrayM</span><span class="t" style="left:1613.97px;top:151px;line-height:19px;font-size:14.4px;color:#e9e9ea;letter-spacing:0.172px;transform:scaleY(0.96);">Kind</span><span class="t" style="left:1652.3px;top:150px;line-height:21px;font-size:16.3px;color:#fff;letter-spacing:-0.502px;transform:scaleY(0.96);">ObjC</span><span class="t" style="left:1589.47px;top:176px;line-height:19px;font-size:14.4px;color:#e9e9ea;letter-spacing:0.172px;transform:scaleY(0.96);">Address</span><span class="t" style="left:1652.3px;top:175px;line-height:21px;font-size:16.3px;color:#fff;letter-spacing:0.253px;transform:scaleY(0.96);">0x6000004aac70</span><span class="t" style="left:1615.67px;top:201px;line-height:19px;font-size:14.4px;color:#e9e9ea;letter-spacing:-0.125px;transform:scaleY(0.96);">Size</span><span class="t" style="left:1652.3px;top:200px;line-height:21px;font-size:16.3px;color:#fff;letter-spacing:0.242px;transform:scaleY(0.96);">48 bytes</span><span class="t" style="left:1562.54px;top:226px;line-height:19px;font-size:14.4px;color:#e9e9ea;letter-spacing:0.237px;transform:scaleY(0.96);">Malloc Zone</span><span class="t" style="left:1652.3px;top:225px;line-height:21px;font-size:16.3px;color:#fff;letter-spacing:0.044px;transform:scaleY(0.96);">DefaultMallocZone</span><div class="" style="left:1535px;top:265.6px;width:359px;height:1.2px;background:#3d4043"></div><span class="t" style="left:1540px;top:270px;line-height:20px;font-size:15.2px;color:#fff;font-weight:bold;letter-spacing:-0.12px;">Hierarchy</span><span class="t" style="left:1652.3px;top:299px;line-height:21px;font-size:16.3px;color:#fff;letter-spacing:-0.114px;transform:scaleY(0.96);"><span style="font-size:72%">__</span>NSArrayM</span><span class="t" style="left:1652.3px;top:318px;line-height:21px;font-size:16.3px;color:#fff;letter-spacing:-0.104px;transform:scaleY(0.96);">NSMutableArray</span><span class="t" style="left:1652.3px;top:337px;line-height:21px;font-size:16.3px;color:#fff;letter-spacing:-0.219px;transform:scaleY(0.96);">NSArray</span><span class="t" style="left:1652.3px;top:357px;line-height:21px;font-size:16.3px;color:#fff;letter-spacing:-0.086px;transform:scaleY(0.96);">NSObject</span><div class="" style="left:1535px;top:396.8px;width:359px;height:1.2px;background:#3d4043"></div><span class="t" style="left:1540px;top:401px;line-height:20px;font-size:15.2px;color:#fff;font-weight:bold;letter-spacing:-0.181px;">Backtrace</span><span class="t" style="left:1572.3px;top:427px;line-height:21px;font-size:16.3px;color:#6f7479;letter-spacing:0.127px;transform:scaleY(0.96);">Malloc stack logging is not enabled for</span><span class="t" style="left:1666.55px;top:447px;line-height:21px;font-size:16.3px;color:#6f7479;letter-spacing:0.084px;transform:scaleY(0.96);">this process.</span><div class="" style="left:1535px;top:484.6px;width:359px;height:1.2px;background:#3d4043"></div></div></body></html>
